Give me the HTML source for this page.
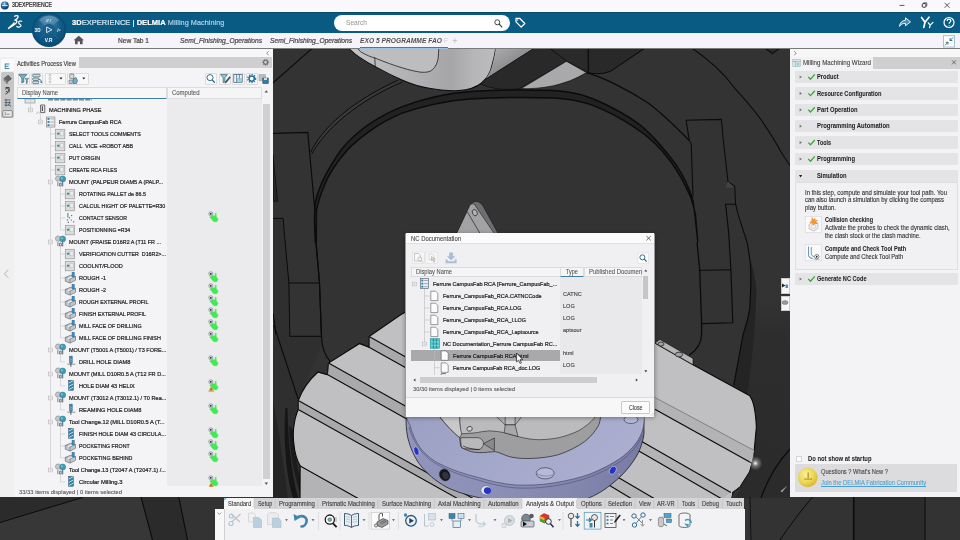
<!DOCTYPE html>
<html><head><meta charset="utf-8"><title>3DEXPERIENCE</title>
<style>
*{box-sizing:border-box;margin:0;padding:0}
html,body{width:960px;height:540px;overflow:hidden;background:#333;font-family:"Liberation Sans",sans-serif;}
.abs{position:absolute}
#root{will-change:transform;position:relative;width:960px;height:540px;overflow:hidden;background:#353535}
.t{position:absolute;white-space:pre;line-height:1;color:#222;-webkit-text-stroke:0.22px currentColor}
#titlebar{left:0;top:0;width:960px;height:12px;background:#faf8fa}
#bluebar{left:0;top:12px;width:960px;height:21px;background:#0a5b84;border-top:0.700px solid #064a6e}
#tabbar{left:0;top:33px;width:960px;height:16px;background:#f5f4f8;border-bottom:1px solid #7a7a7a}
#left{left:0;top:49px;width:272.600px;height:447.500px;background:#f4f3f5}
#right{left:790.300px;top:49px;width:170px;height:447.500px;background:#f3f2f4}
#bottom{left:222px;top:498px;width:523px;height:42px;background:#f4f4f4}
#dlg{left:405px;top:232px;width:250px;height:185px;background:#f4f4f4;border:1px solid #888}
</style></head><body><div id="root">
<svg class="abs" style="left:0;top:48px" width="960" height="492" viewBox="0 48 960 492">
<defs>
<linearGradient id="gSp" x1="0" y1="0" x2="1" y2="0"><stop offset="0" stop-color="#c6c6c8"/><stop offset="0.35" stop-color="#b4b4b6"/><stop offset="0.7" stop-color="#a6a6a8"/><stop offset="0.85" stop-color="#b6b6b8"/><stop offset="1" stop-color="#bcbcbe"/></linearGradient>
<linearGradient id="gSp2" x1="0" y1="0" x2="1" y2="1"><stop offset="0" stop-color="#b2b2b4"/><stop offset="1" stop-color="#6c6c6e"/></linearGradient>
<linearGradient id="gDiscSide" x1="0" y1="0" x2="1" y2="0"><stop offset="0" stop-color="#9195bc"/><stop offset="0.35" stop-color="#8c90b7"/><stop offset="0.7" stop-color="#8387ae"/><stop offset="1" stop-color="#787ca4"/></linearGradient>
<linearGradient id="gDiscTop" x1="0" y1="0" x2="1" y2="0.3"><stop offset="0" stop-color="#9b9fc2"/><stop offset="0.5" stop-color="#a3a7c9"/><stop offset="1" stop-color="#abaecf"/></linearGradient>
<linearGradient id="gRD" x1="0" y1="0" x2="0" y2="1"><stop offset="0" stop-color="#333334"/><stop offset="0.2" stop-color="#2d2d2e"/><stop offset="1" stop-color="#2b2b2c"/></linearGradient>
<radialGradient id="gGl" cx="0.5" cy="0.5" r="0.5"><stop offset="0" stop-color="#fff" stop-opacity="0.95"/><stop offset="0.4" stop-color="#fff" stop-opacity="0.35"/><stop offset="1" stop-color="#fff" stop-opacity="0"/></radialGradient>
<clipPath id="cpTable"><path d="M400.300 315 L440 292 L640 330 L655 343 L693 364.700 L749.800 395.800 C753 400 755.500 408 756.400 427 L753.600 456.700 L749.800 471.800 L740.300 486.900 L732.800 492.600 L732 499 L300 499 L300.200 466.100 C296 458 294.600 452.900 294 445 C293 438 293.200 432 293.600 428.300 C294.500 420 296 414 298.300 409.400 L298.300 400.600 C302 390 309 380 318 372 L327.400 374.600 L328.500 363 L359.600 343.500 L369.100 347.200 L369.100 336.600 Z"/></clipPath>
</defs>
<rect x="0" y="48" width="960" height="492" fill="#333334"/>
<path d="M272.800 83L312.500 48" stroke="#0b0b0b" stroke-width="1.050" fill="none"/>
<path d="M273 201L277.600 201.400L273 155Z" fill="#262626" stroke="#0b0b0b" stroke-width="0.700"/>
<path d="M273 218.400L283.200 218.400L284.200 232L288.900 283L289.800 336.300L321 336.300L322 344 L298.300 399.600 L295 430 L300 470 L306 498 L273 498Z" fill="#2f2f30"/>
<path d="M273 218.400L283.200 218.400L284.200 232L288.900 283L289.800 336.300L321 336.300" stroke="#0b0b0b" stroke-width="1" fill="none"/>
<path d="M273 313C274.500 320 275.200 327 275.700 334" stroke="#0b0b0b" stroke-width="1.050" fill="none"/>
<path d="M273.800 325L298.300 399.600" stroke="#0b0b0b" stroke-width="1.150" fill="none"/>
<path d="M273 400 L280 440 L288 498 L273 498Z" fill="#242425"/>
<path d="M285.500 408 C283 440 286 475 293 498 L298 498 C291 470 288 440 287.500 408Z" fill="#161616"/>
<path d="M289 425 C290 455 295 480 302 498 L306.500 498 C298 476 294 452 294 432Z" fill="#1b1b1b"/>
<path d="M273 133.400L307.800 132.400L315.300 215.600L315.300 232L319.500 283L321.400 334" stroke="#0b0b0b" stroke-width="1.150" fill="none"/>
<path d="M288.900 283L319.500 283" stroke="#0b0b0b" stroke-width="1" fill="none"/>
<path d="M310.600 152.300C322 128 352 101 398.400 80.100L402.200 82C358 101 326 128 311.600 154.200Z" fill="#3a3a3b"/>
<path d="M310.600 152.300C322 128 352 101 398.400 80.100" stroke="#0b0b0b" stroke-width="1" fill="none"/>
<path d="M311.600 154.200C326 128 358 101 402.200 82" stroke="#0b0b0b" stroke-width="1" fill="none"/>
<path d="M315.300 242 L314.400 219.300 C314.600 212 315 207 315.300 202.300 C319 185 327 170 341 150 C352 136 372 119 402.200 106.600 C425 98 445 93.500 470 91.500 C495 90 525 89.500 553.300 90.500 C570 91.500 582 94.500 591 98 C607 104.500 625 114 638.300 123.600 C652 134 662 146 676 164.600 C683 175 688 184 693 200.400 L695 215.600 L697.800 242 L697.800 242 L695.500 215 C694 207 692.500 203 691 198 C685 184 679 173 671 162 C661 148 650 137 634.600 127.300 C622 119 606 110.500 591 104.700 C580 101 568 98.500 553.300 98 C525 97 495 97.500 470 99 C446 100.800 426 105 402.200 113.200 C378 123 358 139 347.400 150 C335 164 327 178 323.800 187 C320.500 195 318.500 200 316.500 210 L316.300 242 Z" fill="#222223" stroke="#0b0b0b" stroke-width="1.400"/>
<path d="M315.800 242L319.500 283L321.400 334C321.500 345 324 355 330.400 361.800" stroke="#0b0b0b" stroke-width="1.200" fill="none"/>
<path d="M697 242L699.700 269.800L701.600 322.700L701.600 334C701.500 342 697 350 689.300 355.200" stroke="#0b0b0b" stroke-width="1.300" fill="none"/>
<path d="M586.400 72.600C600 76 625 88 647.800 102.800C660 112 672 123 689.300 140.600" stroke="#0b0b0b" stroke-width="1.300" fill="none"/>
<path d="M692 48C712 62 725 75 732.800 85.800C745 100 753 108 761 119.800C768 130 776 142 781 152L790 165.500" stroke="#0b0b0b" stroke-width="1.050" fill="none"/>
<path d="M764.900 48L772.400 53.700L780 48" stroke="#0b0b0b" stroke-width="1.050" fill="#2b2b2c"/>
<path d="M689.300 140.600L686.100 120.300L721.400 119.400L723.300 140L728 181.600L734.700 186.300L735.600 204.200L738.400 215.600L747 242" stroke="#0b0b0b" stroke-width="1.050" fill="none"/>
<path d="M728 181.600L725.600 187.500L734.700 187.500Z" fill="#434344"/>
<path d="M735.600 204.200L725.600 204.200L728.600 232L730.900 269.800L732.800 322.700L701.600 323.600" stroke="#0b0b0b" stroke-width="1.150" fill="none"/>
<path d="M699.700 270.300L730.900 269.800" stroke="#0b0b0b" stroke-width="1" fill="none"/>
<path d="M689.300 140.600L691.200 143.800L693 196.700" stroke="#0b0b0b" stroke-width="1.050" fill="none"/>
<path d="M750.700 260.300C755 275 756.800 288 756.400 298C756 312 755 322 754.500 334L756.400 325 L747.900 394.900 L733.700 385.400 L745 325 C748 318 749.500 312 749.800 307.600 C751 295 751 280 750.700 260.300Z" fill="#242425"/>
<path d="M747 242C749 252 750.300 262 750.700 269.800C751 285 750.500 297 749.800 307.600C748.500 318 746 326 743.200 334L733.700 385.400" stroke="#0b0b0b" stroke-width="1.150" fill="none"/>
<path d="M756.400 298 L790 298 L790 498 L735 498 L740.300 486.900 L749.800 471.800 L753.600 456.700 L756.400 427 L754 405 L749.800 395.800 L747.900 394.900 L754.500 334Z" fill="url(#gRD)"/>
<path d="M790 449C778 462 768 478 761 498" stroke="#0b0b0b" stroke-width="1.150" fill="none"/>
<path d="M780.500 491l7-5.500-5.500 7z" fill="#9a9a9a"/>
<path d="M82.500 497.500L141 497L152.500 540L0 540L0 522.500Z" fill="#373738"/>
<path d="M0 522.500L82.500 497.500L0 497.500Z" fill="#2b2b2c"/>
<path d="M0 522.500L82.500 497.500" stroke="#0b0b0b" stroke-width="1" fill="none"/>
<path d="M141 497L152.500 540L187.500 540L178.800 497Z" fill="#2b2b2c"/>
<path d="M141 497L152.500 540M178.800 497L187.500 540" stroke="#0b0b0b" stroke-width="1.100" fill="none"/>
<path d="M853.700 497L853.700 540L925 540L925 497Z" fill="#2c2c2d"/>
<path d="M853.700 497L853.700 540" stroke="#0b0b0b" stroke-width="1.600" fill="none"/><path d="M925 497L925 540" stroke="#0b0b0b" stroke-width="1" fill="none"/>
<path d="M812.500 497C800 512 790 525 780 540" stroke="#0b0b0b" stroke-width="1" fill="none"/>
<path d="M750 497L751 540" stroke="#0b0b0b" stroke-width="0.800" fill="none"/>
<path d="M348.400 48C356 56 366 62 375.800 66.900C385 72 394 76.500 402 80C412 84.500 421 87 430.600 88.600C440 90.500 450 91 459 90.500C468 90 476 87.500 481.600 83C487 78 489.500 74 491 68.800C493 62 495 55 495.700 48Z" fill="url(#gSp)" stroke="#0b0b0b" stroke-width="1.050"/>
<path d="M360.700 51.800C366 55 371 57 375.800 58.400C385 62 394 65.500 402.200 67.800C409 70 416 71.600 421 72.200C426 72.600 430 72 432.400 69.700C435.500 67 437.200 63 438 59.300C438.500 55 438.700 51 438.700 48L357 48Z" fill="#bdbdbf" stroke="#0b0b0b" stroke-width="0.700"/>
<path d="M374.800 57.400L375.200 67" stroke="#0b0b0b" stroke-width="0.700"/>
<path d="M495.700 48L534.400 48L485 79.500C489 75 491 70 492.300 65C493.800 59 495.200 53 495.700 48Z" fill="url(#gSp2)"/>
<path d="M534.400 48L549.600 48L568.400 60.300L519.300 88.600C505 91 490 88.500 480.600 83.900L485 79.500Z" fill="#29292a" stroke="#0b0b0b" stroke-width="0.700"/>
<path d="M549.600 48C553 50.500 556 52.500 560 54.500L568.400 60.300" stroke="#0b0b0b" stroke-width="0.700" fill="none"/>
<path d="M521.200 88.600L566.600 61.200L586.400 72.600C576 79 565 83 553.300 85.800C542 88 531 89 521.200 88.600Z" fill="#a9a9ab" stroke="#0b0b0b" stroke-width="0.600"/>
<path d="M549.600 48L588.300 48L588.300 72.500L566.600 61.200Z" fill="#2a2a2b" stroke="#0b0b0b" stroke-width="0.700"/>
<path d="M588.300 48L645 48L610 71.600C603 74 595 74.500 588.300 72.500Z" fill="#29292a" stroke="#0b0b0b" stroke-width="1.050"/>
<path d="M456.400 234L470.500 205C472 202 475 201 477.500 201.600C480 202.200 481.500 204 483 206L498.400 234Z" fill="#6e6e70" stroke="#0b0b0b" stroke-width="0.500"/>
<path d="M456.400 234L469.800 205.500C471 203.500 473 203.300 474.500 204.500L494.600 234Z" fill="#a2a2a4" stroke="#0b0b0b" stroke-width="0.500"/>
<path d="M467.200 211.700L480.400 234" stroke="#0b0b0b" stroke-width="0.600"/>
<ellipse cx="474.800" cy="212.700" rx="2.300" ry="3.300" transform="rotate(-25 474.800 212.700)" fill="#b4b4b6" stroke="#0b0b0b" stroke-width="0.600"/>
<path d="M400.300 315 L440 292 L640 330 L655 343 L693 364.700 L749.800 395.800 C753 400 755.500 408 756.400 427 L753.600 456.700 L749.800 471.800 L740.300 486.900 L732.800 492.600 L732 499 L300 499 L300.200 466.100 C296 458 294.600 452.900 294 445 C293 438 293.200 432 293.600 428.300 C294.500 420 296 414 298.300 409.400 L298.300 400.600 C302 390 309 380 318 372 L327.400 374.600 L328.500 363 L359.600 343.500 L369.100 347.200 L369.100 336.600 Z" fill="#c0c0c2" stroke="#0b0b0b" stroke-width="1.150"/>
<g clip-path="url(#cpTable)">
<path d="M369.1 336.6L470 393.10400000000004L470 403.70399999999995L369.1 347.2Z" fill="#a9a9ab"/>
<path d="M369.1 336.6L470 393.10400000000004M369.1 347.2L470 403.70399999999995M369.1 336.6L369.1 347.2" stroke="#0b0b0b" stroke-width="1.100" fill="none"/>
<path d="M359.600 343.500L369.100 347.200" stroke="#0b0b0b" stroke-width="1.100"/>
<path d="M328.5 363L470 442.24L470 454.456L327.4 374.6Z" fill="#a9a9ab"/>
<path d="M328.5 363L470 442.24M327.4 374.6L470 454.456M328.5 363L327.4 374.6" stroke="#0b0b0b" stroke-width="1.100" fill="none"/>
<path d="M318 372L327.400 374.600" stroke="#0b0b0b" stroke-width="1.100"/>
<path d="M298.3 400.6L520 524.7520000000001L520 533.552L298.3 409.4Z" fill="#a9a9ab"/>
<path d="M298.3 400.6L520 524.7520000000001M298.3 409.4L520 533.552M298.3 400.6L298.3 409.4" stroke="#0b0b0b" stroke-width="1.100" fill="none"/>
<path d="M300.200 466L360 499.500L300 499.500Z" fill="#b3b3b5" stroke="#0b0b0b" stroke-width="1.150"/>
<path d="M640 389.5L757 452L752 463.2L636 398.7Z" fill="#b3b3b5"/>
<path d="M640 389.5L757 452" stroke="#6a6a6c" stroke-width="0.700" fill="none"/><path d="M636 398.7L752 463.2" stroke="#0b0b0b" stroke-width="1.250" fill="none"/>
<path d="M630 434.7L730.9 492.6L722 499L628 444.7Z" fill="#b3b3b5"/>
<path d="M630 434.7L730.9 492.6M628 444.7L722 499" stroke="#0b0b0b" stroke-width="1.150" fill="none"/>
<path d="M600 466.8L655 499L632 499L596 477.2Z" fill="#b3b3b5"/>
<path d="M600 466.8L655 499M596 477.2L632 499" stroke="#0b0b0b" stroke-width="1.150" fill="none"/>
<path d="M732.800 492.600L740.300 486.900L749.800 471.800L753.600 456.700L756.400 440L757 499L732 499Z" fill="#aeaeb0" stroke="#0b0b0b" stroke-width="1.050"/>
<path d="M741 490v9" stroke="#0b0b0b" stroke-width="0.700"/>
<path d="M750.500 470c-1.500 4-2 9-1.500 13l2.500-1.500c.3-4 .8-8 1.800-11z" fill="#9a9a9c" stroke="#0b0b0b" stroke-width="0.600"/>
</g>
<path d="M655 343L660 339.500L693 358.500L693 364.700Z" fill="#b6b6b8" stroke="#0b0b0b" stroke-width="0.600"/>
<ellipse cx="661" cy="344" rx="3" ry="2" fill="#a2a2a4" stroke="#222" stroke-width="0.800"/><ellipse cx="679" cy="354.500" rx="3.600" ry="2.400" fill="#a2a2a4" stroke="#222" stroke-width="0.800"/>
<circle cx="755.400" cy="463.300" r="7" fill="url(#gGl)"/>
<path d="M406 419C406 428 407 436 408.800 441.600C412 452 416 460 421 466C430 477 440 484 450 488.800C462 494 475 497.500 490 499.500L585 499.500C597 495 606 489 613 483C622 476 632 465 638.300 452.900C641 447 643 441 644 434L644 419Z" fill="url(#gDiscSide)" stroke="#0b0b0b" stroke-width="0.700"/>
<path d="M406 410C406 418 407.500 421 409.800 424.600C412 434 416 442 421 449C428 457 434 461 440 464C452 470 464 474 477.800 477.400C490 481 502 484 515.600 485C528 485.500 541 485 553.300 483C566 481 579 478 591 473.700C602 469 612 464 620 458.600C630 451 638 443 642 432C644 426 644.500 420 644.500 410Z" fill="url(#gDiscTop)" stroke="#3a3c58" stroke-width="0.600"/>
<path d="M409 427C412 438 417 446 422 452C429 460 436 464 442 467C454 473 466 477 479 480.300C491 484 503 487 516 488C528 488.500 541 488 553.500 486C566 484 579 481 591 476.700C602 472 612 467 620.500 461.600C630 454 638 446 642.500 435" stroke="#5a5e88" stroke-width="0.800" fill="none"/>
<ellipse cx="545.200" cy="473.300" rx="9" ry="5.600" fill="#b7bbd9" stroke="#2a2c40" stroke-width="0.600"/><path d="M536.500 472.500c2 4 14 5 17.500 1" stroke="#8a8eb5" stroke-width="1.050" fill="none"/>
<ellipse cx="631" cy="419.500" rx="7" ry="4" fill="#b7bbd9" stroke="#2a2c40" stroke-width="0.600"/>
<ellipse cx="416.400" cy="451" rx="2.400" ry="4.400" transform="rotate(-15 416.400 451)" fill="#2334c4" stroke="#dfe2f5" stroke-width="0.500"/>
<ellipse cx="444.700" cy="475" rx="5.200" ry="6.200" transform="rotate(-30 444.700 475)" fill="#15151d" stroke="#444" stroke-width="0.500"/><ellipse cx="445.500" cy="475.500" rx="3" ry="3.800" transform="rotate(-30 445.500 475.500)" fill="#333340"/>
<ellipse cx="486.300" cy="490.300" rx="5.400" ry="4.600" fill="#e4e6f4" stroke="#555a88" stroke-width="0.500"/><ellipse cx="487.500" cy="490.600" rx="3.600" ry="3.400" fill="#2334c4"/>
<ellipse cx="612.800" cy="470.300" rx="3" ry="4.300" transform="rotate(30 612.800 470.300)" fill="#2334c4" stroke="#dfe2f5" stroke-width="0.500"/><path d="M617.500 472.500l2.500 1.500-.5 2.500z" fill="#ddd" stroke="#555" stroke-width="0.400"/>
<path d="M440 410L440 417C446 425 453 432 459.700 437.700L460.500 445C461 447.500 462 448.300 463.700 448.600C469 451.500 474 452.600 479.500 452.600C485 452.800 490 451.800 495.300 451.600C500 452.500 504 455 509.200 456.600C516 458.200 522 458.600 529 458.500C540 458.300 550 457 558.700 454.600C568 451.500 577 447 584.500 441.700C591 436.500 595 431.500 598.300 425.900C600 422 600.700 419 600.700 410Z" fill="#9e9ea0" stroke="#0b0b0b" stroke-width="0.600"/>
<path d="M459.700 410C459.500 418 459.500 426 460.700 433.800C466 433.500 471 433.200 475.500 432.800C480 432 485 431 489.400 430.800C495 431 500 431.800 505.200 432.800C510 434 514 435.600 519.100 436.800C526 438.600 532 439.600 538.900 439.700C546 439.600 552 439 558.700 437.700C566 436 572 433.800 578.500 430.800C585 427 590 423 594.400 418L596 410Z" fill="#bbbbbd" stroke="#0b0b0b" stroke-width="0.500"/>
<path d="M440 410L440 417C446 425 453 432 459.700 437.700C460.500 436 461 435 461.700 433.800C460 428 459.500 422 459.700 417L459.700 410Z" fill="#c9c9cb" stroke="#0b0b0b" stroke-width="0.500"/>
<path d="M489.400 410L505.200 424.900L515.100 424.900L527 410Z" fill="#b2b2b4" stroke="#0b0b0b" stroke-width="0.500"/>
<path d="M505.200 410L505.200 424.900L515.100 424.900L515.100 410Z" fill="#bcbcbe" stroke="#0b0b0b" stroke-width="0.500"/>
<path d="M505.200 424.900L504.200 432.800L518 436.500L515.100 424.900Z" fill="#a8a8aa" stroke="#0b0b0b" stroke-width="0.500"/>
<path d="M460.700 437.700L478 437.700C481 438 483.500 440.500 483.500 443.600C483.500 446.800 481 449.300 478 449.600L463.700 448.600C461.500 447.800 460.700 446 460.700 437.700Z" fill="#b9b9bb" stroke="#0b0b0b" stroke-width="0.500"/>
<path d="M483.500 443.600L494.400 438L494.400 450.500Z" fill="#8a8a8c" stroke="#0b0b0b" stroke-width="0.500"/>
<path d="M463 446C468 448.500 474 449.300 479.500 449.600" stroke="#0b0b0b" stroke-width="0.600" fill="none"/>
<ellipse cx="469.600" cy="428.800" rx="2.700" ry="2.300" transform="rotate(-20 469.600 428.800)" fill="#d2d2d4" stroke="#0b0b0b" stroke-width="0.600"/>
</svg>
<div class="abs" id="titlebar"></div>
<svg class="abs" style="left:0;top:0" width="14" height="12" viewBox="0 0 14 12"><defs><radialGradient id="gLogo" cx="0.4" cy="0.3" r="0.7"><stop offset="0" stop-color="#7fb4dc"/><stop offset="0.6" stop-color="#1f5f95"/><stop offset="1" stop-color="#0a3560"/></radialGradient></defs><circle cx="4.8" cy="5.6" r="4" fill="url(#gLogo)"/><path d="M2 5.5h5.6M4.8 2.6v2.2" stroke="#e8f2fa" stroke-width="0.9" fill="none"/></svg>
<div class="t" style="left:12.00px;top:2.48px;font-size:6.6px;color:#222;transform:scaleX(0.785);transform-origin:0 0;">3DEXPERIENCE</div>
<svg class="abs" style="left:890px;top:0" width="70" height="12" viewBox="890 0 70 12" fill="none" stroke="#333" stroke-width="0.8"><path d="M899.5 5.4h5"/><rect x="922.3" y="3.6" width="3.6" height="3.6" rx="0.8" stroke-width="1"/><path d="M923.4 2.8h3.4v3.4" stroke-width="0.7"/><path d="M944.6 2.8l5 5M949.6 2.8l-5 5"/></svg>
<div class="abs" id="bluebar"></div>
<div class="abs" id="tabbar"></div>
<!-- 3DS logo -->
<svg class="abs" style="left:5px;top:13px" width="22" height="19" viewBox="5 13 22 19" fill="none" stroke="#fff" stroke-linecap="round"><path d="M14.5 16.2c2-1.2 4-.6 3.6 1-.3 1.300-2 2.400-3.600 3.100 1.600-.2 2.800.5 2.300 1.800-.6 1.700-5 4.200-8.600 6.600 2.700-2.800 5.300-4.600 5.900-5.800" stroke-width="1.300"/><path d="M21.700 21.300c-1.300-.6-2.800-.2-3.100.9-.3 1 .6 1.600 1.500 2.200.9.600 1.300 1.400.3 2.200-1 .7-2.600.5-3.600-.2" stroke-width="1.200"/></svg>
<!-- brand text -->
<div class="t" style="left:72px;top:18.800px;font-size:7.600px;color:#fff;letter-spacing:0.05px;transform:scaleX(0.985);transform-origin:0 0"><b>3D</b><span style="color:#d6e6f0">EXPERIENCE</span> <span style="color:#fff">|</span> <b>DELMIA</b> <span style="color:#a9cfe6;font-size:7.400px">Milling Machining</span></div>
<!-- compass -->
<svg class="abs" style="left:30px;top:11px" width="38" height="38" viewBox="30 11 38 38"><defs><radialGradient id="gC" cx="0.5" cy="0.35" r="0.7"><stop offset="0" stop-color="#3f7fa6"/><stop offset="0.55" stop-color="#115a86"/><stop offset="1" stop-color="#084a73"/></radialGradient><linearGradient id="gC2" x1="0" y1="0" x2="0" y2="1"><stop offset="0" stop-color="#8fb6cf"/><stop offset="1" stop-color="#2f7098"/></linearGradient></defs>
<circle cx="49" cy="29.800" r="17.200" fill="#0b4f79"/><circle cx="49" cy="29.800" r="16" fill="url(#gC)" stroke="#06466e" stroke-width="0.6"/>
<path d="M37.800 22.500a13.600 13.600 0 0 1 22.400 0 13.600 13.600 0 0 0-22.400 0z" fill="none"/><path d="M49 29.800L39.200 20L39.450 20.250A13.800 13.800 0 0 1 58.800 20Z" fill="url(#gC2)" opacity="0.600"/><path d="M39.200 20A13.800 13.800 0 0 1 58.800 20" fill="none" stroke="#8fb6cf" stroke-width="0.500" opacity="0.700"/>
<circle cx="49" cy="29.800" r="5.600" fill="#1a628d" stroke="#0c4e78" stroke-width="0.5"/>
<path d="M46.600 27l5.300 2.800-5.300 2.800z" fill="none" stroke="#fff" stroke-width="0.800" stroke-linejoin="round"/>
<path d="M40 38.500l4-4M58 38.500l-4-4" stroke="#3f81a8" stroke-width="0.500"/>
<text x="34.600" y="31.500" font-family="Liberation Sans,sans-serif" font-size="4.600" font-weight="bold" fill="#fff">3D</text>
<text x="44.800" y="41.800" font-family="Liberation Sans,sans-serif" font-size="4.800" font-weight="bold" fill="#fff">V.R</text>
<text x="46" y="21.600" font-family="Liberation Sans,sans-serif" font-size="4.400" font-style="italic" font-weight="bold" fill="#e6f0f7">// /</text>
<text x="57.300" y="31.500" font-family="Liberation Sans,sans-serif" font-size="4.800" font-style="italic" font-weight="bold" fill="#e6f0f7">i²</text>
</svg>
<!-- search -->
<div class="abs" style="left:334px;top:15px;width:176px;height:15.500px;border-radius:8px;background:#fff"></div>
<div class="t" style="left:346px;top:20px;font-size:6.600px;color:#999;-webkit-text-stroke:0.05px currentColor">Search</div>
<svg class="abs" style="left:492px;top:17px" width="36" height="12" viewBox="492 17 36 12" fill="none"><circle cx="497.300" cy="22.300" r="2.500" stroke="#333" stroke-width="0.900"/><path d="M499.200 24.200l2.600 2.600" stroke="#333" stroke-width="1.100" stroke-linecap="round"/><path d="M516 18.300h3.600l5.200 5.200-3.600 3.600-5.200-5.200z" stroke="#fff" stroke-width="1.250" stroke-linejoin="round"/><circle cx="517.700" cy="20" r="0.700" fill="#fff"/></svg>
<!-- right icons -->
<svg class="abs" style="left:895px;top:14px" width="65" height="18" viewBox="895 14 65 18" fill="none" stroke="#fff"><path d="M905.500 17.800l5 4-5 4v-2.400c-2.800-.2-4.800.8-6 3 .3-3.600 2.400-5.800 6-6.200z" stroke-width="0.900" stroke-linejoin="round" fill="#cfe3f0" fill-opacity="0.35"/><path d="M921.600 17.400l3.400 4.800-1.200 5.200M929 17.200l-4 5" stroke-width="1.700" stroke-linecap="round"/><path d="M928.300 22.800l1.900 2.200-.6 2.600M933 22.400l-2.800 2.800" stroke-width="1.200" stroke-linecap="round"/><circle cx="949" cy="22.500" r="5" stroke-width="1.200"/><path d="M947.200 21c0-1.200.8-1.800 1.800-1.800s1.800.7 1.800 1.600c0 1.300-1.700 1.400-1.700 2.900" stroke-width="1.200"/><circle cx="949.100" cy="25.500" r="0.550" fill="#fff" stroke="none"/></svg>
<!-- tabs -->
<svg class="abs" style="left:73px;top:35px" width="12" height="10" viewBox="73 35 12 10"><path d="M73.600 40.200l5.200-4.400 5.200 4.400h-1.400v4h-2.600v-2.600h-2.400v2.600h-2.600v-4z" fill="#555"/></svg>
<div class="t" style="left:118px;top:38px;font-size:6.600px;color:#4a4a4a">New Tab 1</div>
<div class="t" style="left:180px;top:37.900px;font-size:6.700px;color:#4a4a4a;font-style:italic;width:84px;overflow:hidden">Semi_Finishing_Operations</div>
<div class="t" style="left:270px;top:37.900px;font-size:6.700px;color:#4a4a4a;font-style:italic;width:85px;overflow:hidden">Semi_Finishing_Operations</div>
<div class="t" style="left:360px;top:37.900px;font-size:6.600px;color:#505050;font-style:italic;font-weight:bold;letter-spacing:0.05px;-webkit-text-stroke:0">EXO 5 PROGRAMME FAO <span style="color:#ccc;font-weight:normal">F</span></div>
<div class="abs" style="left:359.500px;top:46.900px;width:88.500px;height:1.500px;background:#3d7ea8"></div><div class="abs" style="left:359.500px;top:48.300px;width:88.500px;height:0.900px;background:#9cc3e2"></div>
<div class="t" style="left:452.300px;top:36.500px;font-size:9px;color:#aaa;-webkit-text-stroke:0">+</div>
<svg class="abs" style="left:942px;top:35px" width="14" height="13" viewBox="942 35 14 13"><rect x="943.300" y="35.800" width="11.400" height="11.200" fill="#fff" stroke="#6f9dbb" stroke-width="0.600"/><path d="M953 37.500l-3 3m0-2.300v2.300h2.300M945 45.300l3-3m0 2.300v-2.300h-2.300" stroke="#2f5f80" stroke-width="0.900" fill="none"/></svg>
<div class="abs" id="left"></div>
<div class="abs" style="left:0;top:49px;width:272.600px;height:8px;background:#f7f6f8"></div>
<div class="abs" style="left:14px;top:57px;width:258px;height:11px;background:#cfcfcf"></div>
<div class="abs" style="left:14px;top:57px;width:65px;height:11.5px;background:#f4f4f4"></div>
<div class="t" style="left:17.00px;top:61.00px;font-size:6.4px;color:#333;transform:scaleX(0.899);transform-origin:0 0;-webkit-text-stroke:0.1px currentColor;">Activities Process View</div>
<svg class="abs" style="left:260px;top:49px" width="13" height="20" viewBox="260 49 13 20" fill="none"><path d="M268.6 51.3l-1.8 2 1.8 2" stroke="#666" stroke-width="0.7"/><circle cx="265.6" cy="62.3" r="2" stroke="#666" stroke-width="1.1"/><circle cx="265.6" cy="62.3" r="3" stroke="#666" stroke-width="0.9" stroke-dasharray="1 1.1"/></svg>
<div class="abs" style="left:0;top:57px;width:14px;height:440px;background:#f0f0f0"></div>
<div class="abs" style="left:1px;top:59px;width:13px;height:12px;background:#fafafa;border-radius:1.5px 0 0 1.5px"></div>
<div class="abs" style="left:1px;top:71.600px;width:13px;height:46.400px;background:#c6c6c6;border-radius:1.5px"></div>
<svg class="abs" style="left:0;top:58px" width="14" height="62" viewBox="0 58 14 62" fill="none"><path d="M5.200 63.600v5.200M5.200 64h4.200M5.200 66.300h3.400M5.200 68.600h4.200" stroke="#2f7a9e" stroke-width="0.900"/><path d="M4 78.500l4.200-3.300 3.200 3.600-4.200 3.300z" fill="#666" stroke="#333" stroke-width="0.500"/><path d="M4 78.500v1.800l3.200 3.500v-1.700" fill="#999" stroke="#333" stroke-width="0.400"/><path d="M5.500 87.500h3.600v4.200M5 89.300c2-1.300 4-.7 4 1 0 1.700-1.700 3-3.600 3.800M5.800 91.700c1.400-.5 2.400.1 2.200 1" stroke="#333" stroke-width="0.900"/><path d="M4.600 100h6M4.600 102.600h6M4.600 105.200h6M6 98.800v7.600M9.400 101.400v2.600" stroke="#444" stroke-width="0.700"/><path d="M8 104l2.800 2.600" stroke="#2f7a9e" stroke-width="1"/><rect x="2.700" y="110.600" width="9.600" height="6.400" rx="1" fill="#e8e8e8" stroke="#555" stroke-width="0.600"/><path d="M5.200 112.200v3.300M6.500 114.200h3" stroke="#555" stroke-width="0.600"/></svg>
<svg class="abs" style="left:2px;top:268px" width="8" height="12" viewBox="2 268 8 12" fill="none"><path d="M8.300 269.800l-3.800 4 3.800 4" stroke="#aaa" stroke-width="0.900"/></svg>
<div class="abs" style="left:17.5px;top:72.5px;width:12.5px;height:12px;background:#f8f8f8;border:0.6px solid #dcdcdc;border-radius:1px"></div>
<div class="abs" style="left:31px;top:72.5px;width:12px;height:12px;background:#f8f8f8;border:0.6px solid #dcdcdc;border-radius:1px"></div>
<div class="abs" style="left:44.5px;top:72.5px;width:21px;height:12px;background:#f8f8f8;border:0.6px solid #dcdcdc;border-radius:1px"></div>
<div class="abs" style="left:67px;top:72.5px;width:22px;height:12px;background:#f8f8f8;border:0.6px solid #dcdcdc;border-radius:1px"></div>
<div class="abs" style="left:204.5px;top:72.5px;width:12.5px;height:12px;background:#f8f8f8;border:0.6px solid #dcdcdc;border-radius:1px"></div>
<div class="abs" style="left:218.5px;top:72.5px;width:12.5px;height:12px;background:#f8f8f8;border:0.6px solid #dcdcdc;border-radius:1px"></div>
<div class="abs" style="left:232px;top:72.5px;width:12.5px;height:12px;background:#f8f8f8;border:0.6px solid #dcdcdc;border-radius:1px"></div>
<div class="abs" style="left:245.5px;top:72.5px;width:12.5px;height:12px;background:#f8f8f8;border:0.6px solid #dcdcdc;border-radius:1px"></div>
<svg class="abs" style="left:17px;top:72px" width="256" height="14" viewBox="17 72 256 14" fill="none"><path d="M18.800 74.600h8l-3 3.400v4l-2 1v-5z" fill="#6fb7c9" stroke="#245" stroke-width="0.600"/><path d="M25 78.400h3.600l-1.300 1.700v3l-1 .5v-3.500z" fill="#7cc" stroke="#245" stroke-width="0.500"/><rect x="32.700" y="74.300" width="7.400" height="2.600" rx="0.800" fill="#cfe3ea" stroke="#245" stroke-width="0.600"/><rect x="32.700" y="78" width="6" height="2.400" rx="0.800" fill="#cfe3ea" stroke="#245" stroke-width="0.600"/><rect x="32.700" y="81.200" width="6" height="2.400" rx="0.800" fill="#cfe3ea" stroke="#245" stroke-width="0.600"/><path d="M38.800 79.500c2.200 0 3 1.300 2.200 3l1.300-.3M41 82.500l-.8-1" stroke="#1f6f8f" stroke-width="0.900"/><circle cx="50" cy="75.300" r="1" stroke="#999" stroke-width="0.500"/><circle cx="50" cy="78.500" r="1" stroke="#999" stroke-width="0.500"/><circle cx="50" cy="81.800" r="1" stroke="#999" stroke-width="0.500"/><path d="M59.500 77.600h3l-1.500 1.800z" fill="#222"/><rect x="69.800" y="74" width="4" height="4.600" rx="0.600" fill="#ddd" stroke="#456" stroke-width="0.600"/><path d="M69 80h3.300v3.500H69z" fill="#bcd" stroke="#456" stroke-width="0.500"/><path d="M73 79l3-1.500 1.500 3-1 3h-3.200z" fill="#6fb0d0" stroke="#245" stroke-width="0.500"/><path d="M82.300 77.600h3l-1.500 1.800z" fill="#222"/><circle cx="210" cy="77.600" r="3" stroke="#1f5f80" stroke-width="0.900" fill="#fff"/><path d="M212.200 80l2.600 2.700" stroke="#1f5f80" stroke-width="1.200"/><path d="M220.500 74.600h7l-2.600 3.200v4l-1.800.9v-4.900z" fill="#8ecbd8" stroke="#245" stroke-width="0.600"/><path d="M229.500 76.600l-4 5-.6 1.600 1.600-.7 4-5z" fill="#456" stroke="#234" stroke-width="0.400"/><rect x="233.800" y="74.600" width="8.400" height="8" fill="#eef" stroke="#245" stroke-width="0.600"/><path d="M236.600 74.600v8M239.400 74.600v5" stroke="#245" stroke-width="0.600"/><path d="M236.600 78h5.600v4.600h-5.600z" fill="#7fc0d5" opacity="0.700"/><circle cx="251.700" cy="78.600" r="2.600" stroke="#1f6f95" stroke-width="1.500" fill="#fff"/><circle cx="251.700" cy="78.600" r="4" stroke="#1f6f95" stroke-width="1.200" stroke-dasharray="1.300 1.300"/><rect x="259" y="74.400" width="6.500" height="6.500" fill="#bbb" stroke="#999" stroke-width="0.400"/><rect x="262.800" y="78" width="5.600" height="5.600" fill="#2f7f9f" stroke="#245" stroke-width="0.500"/><rect x="264" y="78" width="3" height="2" fill="#cde"/></svg>
<div class="abs" style="left:16.500px;top:87px;width:150px;height:11.500px;background:#f7f7f7;border:0.600px solid #ddd;border-bottom:1.400px solid #3d7ea8"></div>
<div class="abs" style="left:166.500px;top:87px;width:95px;height:11.500px;background:#f5f5f5;border:0.600px solid #ddd"></div>
<div class="t" style="left:22.00px;top:90.00px;font-size:6.3px;color:#555;transform:scaleX(0.918);transform-origin:0 0;-webkit-text-stroke:0.08px currentColor;">Display Name</div>
<div class="t" style="left:171.50px;top:90.00px;font-size:6.3px;color:#555;transform:scaleX(0.946);transform-origin:0 0;-webkit-text-stroke:0.08px currentColor;">Computed</div>
<div class="abs" style="left:166.500px;top:98.500px;width:95px;height:387px;background:#ebeaec"></div>
<div class="abs" style="left:263px;top:104px;width:6.500px;height:375px;background:#d0cfd1"></div>
<svg class="abs" style="left:262px;top:88px" width="10" height="402" viewBox="262 88 10 402"><path d="M264.600 92.600h3.400l-1.700-2.400zM264.600 482.600h3.400l-1.700 2.400z" fill="#555"/></svg>
<div class="t" style="left:18.50px;top:489.00px;font-size:6.2px;color:#555;transform:scaleX(0.940);transform-origin:0 0;-webkit-text-stroke:0.1px currentColor;">33/33 items displayed | 0 items selected</div>
<svg class="abs" style="left:14px;top:99px" width="252" height="388" viewBox="14 99 252 388" fill="none"><rect x="25" y="99" width="10" height="4" fill="#e4e4e4" stroke="#777" stroke-width="0.500"/><path d="M48 99.800h44" stroke="#666" stroke-width="1.400" stroke-dasharray="5 1.200" opacity="0.800"/><path d="M30.500 99v11M40.500 114v8M50.500 126v344.500" stroke="#c4c4c4" stroke-width="0.600"/><rect x="28.6" y="108.1" width="3.800" height="3.800" fill="#f8f8f8" stroke="#aaa" stroke-width="0.500"/><path d="M29.5 110h2" stroke="#777" stroke-width="0.500"/><path d="M40.6 105h4.200v7.600h-4.200z" fill="#e8e8e8" stroke="#333" stroke-width="0.700"/><path d="M42.4 106.2v4.800" stroke="#333" stroke-width="0.900"/><path d="M36 114l2.400-2 1.600 1.600" stroke="#888" stroke-width="0.500" fill="none"/><rect x="38.6" y="120.1" width="3.800" height="3.800" fill="#f8f8f8" stroke="#aaa" stroke-width="0.500"/><path d="M39.5 122h2" stroke="#777" stroke-width="0.500"/><rect x="46.5" y="117" width="8.400" height="10" fill="#eee" stroke="#777" stroke-width="0.600"/><rect x="47.5" y="118.0" width="2" height="1.800" fill="#2f7fa5"/><path d="M50.3 118.9h3.800" stroke="#888" stroke-width="0.600"/><rect x="47.5" y="121.1" width="2" height="1.800" fill="#2f7fa5"/><path d="M50.3 122.0h3.800" stroke="#888" stroke-width="0.600"/><rect x="47.5" y="124.2" width="2" height="1.800" fill="#2f7fa5"/><path d="M50.3 125.10000000000001h3.800" stroke="#888" stroke-width="0.600"/><path d="M50.500 134h5" stroke="#c4c4c4" stroke-width="0.600"/><rect x="55.5" y="129.3" width="9.300" height="9.500" fill="#dcdcdc" stroke="#9a9a9a" stroke-width="0.700"/><rect x="60.1" y="131.2" width="3.400" height="4.600" fill="#ececec" stroke="#b5b5b5" stroke-width="0.500"/><rect x="57.1" y="132.8" width="2.400" height="1.800" fill="#2f8c96"/><path d="M50.500 146h5" stroke="#c4c4c4" stroke-width="0.600"/><rect x="55.5" y="141.3" width="9.300" height="9.500" fill="#dcdcdc" stroke="#9a9a9a" stroke-width="0.700"/><rect x="60.1" y="143.2" width="3.400" height="4.600" fill="#ececec" stroke="#b5b5b5" stroke-width="0.500"/><rect x="57.1" y="144.8" width="2.400" height="1.800" fill="#2f8c96"/><path d="M50.500 158h5" stroke="#c4c4c4" stroke-width="0.600"/><rect x="55.5" y="153.3" width="9.300" height="9.500" fill="#dcdcdc" stroke="#9a9a9a" stroke-width="0.700"/><rect x="60.1" y="155.2" width="3.400" height="4.600" fill="#ececec" stroke="#b5b5b5" stroke-width="0.500"/><rect x="57.1" y="156.8" width="2.400" height="1.800" fill="#2f8c96"/><path d="M50.500 170h5" stroke="#c4c4c4" stroke-width="0.600"/><rect x="55.5" y="165.3" width="9.300" height="9.500" fill="#dcdcdc" stroke="#9a9a9a" stroke-width="0.700"/><rect x="60.1" y="167.2" width="3.400" height="4.600" fill="#ececec" stroke="#b5b5b5" stroke-width="0.500"/><rect x="57.1" y="168.8" width="2.400" height="1.800" fill="#2f8c96"/><rect x="48.6" y="180.1" width="3.800" height="3.800" fill="#f8f8f8" stroke="#aaa" stroke-width="0.500"/><path d="M49.5 182h2" stroke="#777" stroke-width="0.500"/><circle cx="58.1" cy="178.6" r="2.700" fill="#c4c6c8" stroke="#8a8c8e" stroke-width="0.600"/><circle cx="62.7" cy="179" r="3" fill="#3a9db5" stroke="#2a7f95" stroke-width="0.500"/><circle cx="61.9" cy="178.2" r="1" fill="#7fc8d8"/><path d="M62.7 182v4.400" stroke="#456" stroke-width="0.900"/><path d="M57.9 182v4.200M59.5 183.2h1.800v2.800h-1.800z" stroke="#456" stroke-width="0.700" fill="none"/><path d="M60.500 194h4.500" stroke="#c4c4c4" stroke-width="0.600"/><rect x="65.3" y="189.3" width="9.300" height="9.500" fill="#dcdcdc" stroke="#9a9a9a" stroke-width="0.700"/><rect x="69.89999999999999" y="191.2" width="3.400" height="4.600" fill="#ececec" stroke="#b5b5b5" stroke-width="0.500"/><rect x="66.89999999999999" y="192.8" width="2.400" height="1.800" fill="#2f8c96"/><path d="M60.500 206h4.500" stroke="#c4c4c4" stroke-width="0.600"/><rect x="65.3" y="201.3" width="9.300" height="9.500" fill="#dcdcdc" stroke="#9a9a9a" stroke-width="0.700"/><rect x="69.89999999999999" y="203.2" width="3.400" height="4.600" fill="#ececec" stroke="#b5b5b5" stroke-width="0.500"/><rect x="66.89999999999999" y="204.8" width="2.400" height="1.800" fill="#2f8c96"/><path d="M60.500 218h4.500" stroke="#c4c4c4" stroke-width="0.600"/><path d="M67.89999999999999 213v4.600" stroke="#2f8c96" stroke-width="1"/><circle cx="67.3" cy="219.8" r="0.600" fill="#335"/><circle cx="69.5" cy="217.8" r="0.600" fill="#335"/><circle cx="71.3" cy="220" r="0.600" fill="#335"/><circle cx="73.7" cy="221.8" r="0.600" fill="#335"/><circle cx="68.3" cy="222.2" r="0.600" fill="#335"/><circle cx="71.7" cy="215.6" r="0.600" fill="#335"/><path d="M209.6 217.0L212.8 215.4L215 215.8L215.2 212.9L216.2 212.9L216.4 216.4L218.3 219.6L216.6 222.0L213.6 221.8Z" fill="#42ea52" stroke="#5af06a" stroke-width="0.300"/><circle cx="210.800" cy="213.8" r="2.100" fill="#d8dce4" stroke="#8a8e98" stroke-width="0.700"/><circle cx="210.800" cy="213.8" r="0.900" fill="#1c1c28"/><path d="M60.500 230h4.500" stroke="#c4c4c4" stroke-width="0.600"/><rect x="65.3" y="225.3" width="9.300" height="9.500" fill="#dcdcdc" stroke="#9a9a9a" stroke-width="0.700"/><rect x="69.89999999999999" y="227.2" width="3.400" height="4.600" fill="#ececec" stroke="#b5b5b5" stroke-width="0.500"/><rect x="66.89999999999999" y="228.8" width="2.400" height="1.800" fill="#2f8c96"/><rect x="48.6" y="240.1" width="3.800" height="3.800" fill="#f8f8f8" stroke="#aaa" stroke-width="0.500"/><path d="M49.5 242h2" stroke="#777" stroke-width="0.500"/><circle cx="58.1" cy="238.6" r="2.700" fill="#c4c6c8" stroke="#8a8c8e" stroke-width="0.600"/><circle cx="62.7" cy="239" r="3" fill="#3a9db5" stroke="#2a7f95" stroke-width="0.500"/><circle cx="61.9" cy="238.2" r="1" fill="#7fc8d8"/><path d="M62.7 242v4.400" stroke="#456" stroke-width="0.900"/><path d="M57.9 242v4.200M59.5 243.2h1.800v2.800h-1.800z" stroke="#456" stroke-width="0.700" fill="none"/><path d="M60.500 254h4.500" stroke="#c4c4c4" stroke-width="0.600"/><rect x="65.3" y="249.3" width="9.300" height="9.500" fill="#dcdcdc" stroke="#9a9a9a" stroke-width="0.700"/><rect x="69.89999999999999" y="251.2" width="3.400" height="4.600" fill="#ececec" stroke="#b5b5b5" stroke-width="0.500"/><rect x="66.89999999999999" y="252.8" width="2.400" height="1.800" fill="#2f8c96"/><path d="M60.500 266h4.500" stroke="#c4c4c4" stroke-width="0.600"/><rect x="65.3" y="261.3" width="9.300" height="9.500" fill="#dcdcdc" stroke="#9a9a9a" stroke-width="0.700"/><rect x="69.89999999999999" y="263.2" width="3.400" height="4.600" fill="#ececec" stroke="#b5b5b5" stroke-width="0.500"/><rect x="66.89999999999999" y="264.8" width="2.400" height="1.800" fill="#2f8c96"/><path d="M60.500 278h4.500" stroke="#c4c4c4" stroke-width="0.600"/><path d="M65.3 277.4l5.400-2.200 4.800 1.300v3.800l-5.400 2.800-4.800-1.900z" fill="#c3c7ca" stroke="#5a626a" stroke-width="0.600"/><path d="M65.3 277.4l4.800 1.700 5.400-2.600M70.1 279.1v4" stroke="#5a626a" stroke-width="0.500" fill="none"/><path d="M66.89999999999999 278.6l5-2.300 1.600.5-5 2.400z" fill="#e6e8ea"/><rect x="72.0" y="272.2" width="2.300" height="4.800" fill="#3a8fc0" stroke="#25628a" stroke-width="0.400"/><path d="M209.6 277.0L212.8 275.4L215 275.8L215.2 272.9L216.2 272.9L216.4 276.4L218.3 279.6L216.6 282.0L213.6 281.8Z" fill="#42ea52" stroke="#5af06a" stroke-width="0.300"/><circle cx="210.800" cy="273.8" r="2.100" fill="#d8dce4" stroke="#8a8e98" stroke-width="0.700"/><circle cx="210.800" cy="273.8" r="0.900" fill="#1c1c28"/><path d="M60.500 290h4.500" stroke="#c4c4c4" stroke-width="0.600"/><path d="M65.3 289.4l5.400-2.200 4.800 1.300v3.800l-5.400 2.800-4.800-1.900z" fill="#c3c7ca" stroke="#5a626a" stroke-width="0.600"/><path d="M65.3 289.4l4.800 1.700 5.400-2.600M70.1 291.1v4" stroke="#5a626a" stroke-width="0.500" fill="none"/><path d="M66.89999999999999 290.6l5-2.300 1.600.5-5 2.400z" fill="#e6e8ea"/><rect x="72.0" y="284.2" width="2.300" height="4.800" fill="#3a8fc0" stroke="#25628a" stroke-width="0.400"/><path d="M209.6 289.0L212.8 287.4L215 287.8L215.2 284.9L216.2 284.9L216.4 288.4L218.3 291.6L216.6 294.0L213.6 293.8Z" fill="#42ea52" stroke="#5af06a" stroke-width="0.300"/><circle cx="210.800" cy="285.8" r="2.100" fill="#d8dce4" stroke="#8a8e98" stroke-width="0.700"/><circle cx="210.800" cy="285.8" r="0.900" fill="#1c1c28"/><path d="M60.500 302h4.500" stroke="#c4c4c4" stroke-width="0.600"/><path d="M65.3 301.4l5.400-2.200 4.800 1.300v3.800l-5.400 2.800-4.800-1.900z" fill="#c3c7ca" stroke="#5a626a" stroke-width="0.600"/><path d="M65.3 301.4l4.800 1.700 5.400-2.600M70.1 303.1v4" stroke="#5a626a" stroke-width="0.500" fill="none"/><path d="M66.89999999999999 302.6l5-2.300 1.600.5-5 2.400z" fill="#e6e8ea"/><rect x="72.0" y="296.2" width="2.300" height="4.800" fill="#3a8fc0" stroke="#25628a" stroke-width="0.400"/><path d="M209.6 301.0L212.8 299.4L215 299.8L215.2 296.9L216.2 296.9L216.4 300.4L218.3 303.6L216.6 306.0L213.6 305.8Z" fill="#42ea52" stroke="#5af06a" stroke-width="0.300"/><circle cx="210.800" cy="297.8" r="2.100" fill="#d8dce4" stroke="#8a8e98" stroke-width="0.700"/><circle cx="210.800" cy="297.8" r="0.900" fill="#1c1c28"/><path d="M60.500 314h4.500" stroke="#c4c4c4" stroke-width="0.600"/><path d="M65.3 313.4l5.400-2.200 4.800 1.300v3.800l-5.400 2.800-4.800-1.900z" fill="#c3c7ca" stroke="#5a626a" stroke-width="0.600"/><path d="M65.3 313.4l4.800 1.700 5.400-2.600M70.1 315.1v4" stroke="#5a626a" stroke-width="0.500" fill="none"/><path d="M66.89999999999999 314.6l5-2.300 1.600.5-5 2.400z" fill="#e6e8ea"/><rect x="72.0" y="308.2" width="2.300" height="4.800" fill="#3a8fc0" stroke="#25628a" stroke-width="0.400"/><path d="M209.6 313.0L212.8 311.4L215 311.8L215.2 308.9L216.2 308.9L216.4 312.4L218.3 315.6L216.6 318.0L213.6 317.8Z" fill="#42ea52" stroke="#5af06a" stroke-width="0.300"/><circle cx="210.800" cy="309.8" r="2.100" fill="#d8dce4" stroke="#8a8e98" stroke-width="0.700"/><circle cx="210.800" cy="309.8" r="0.900" fill="#1c1c28"/><path d="M60.500 326h4.500" stroke="#c4c4c4" stroke-width="0.600"/><path d="M65.3 325.4l5.400-2.200 4.800 1.300v3.800l-5.400 2.800-4.800-1.900z" fill="#c3c7ca" stroke="#5a626a" stroke-width="0.600"/><path d="M65.3 325.4l4.800 1.700 5.400-2.600M70.1 327.1v4" stroke="#5a626a" stroke-width="0.500" fill="none"/><path d="M66.89999999999999 326.6l5-2.300 1.600.5-5 2.400z" fill="#e6e8ea"/><rect x="72.0" y="320.2" width="2.300" height="4.800" fill="#3a8fc0" stroke="#25628a" stroke-width="0.400"/><path d="M209.6 325.0L212.8 323.4L215 323.8L215.2 320.9L216.2 320.9L216.4 324.4L218.3 327.6L216.6 330.0L213.6 329.8Z" fill="#42ea52" stroke="#5af06a" stroke-width="0.300"/><circle cx="210.800" cy="321.8" r="2.100" fill="#d8dce4" stroke="#8a8e98" stroke-width="0.700"/><circle cx="210.800" cy="321.8" r="0.900" fill="#1c1c28"/><path d="M60.500 338h4.500" stroke="#c4c4c4" stroke-width="0.600"/><path d="M65.3 337.4l5.400-2.200 4.800 1.300v3.800l-5.400 2.800-4.800-1.900z" fill="#c3c7ca" stroke="#5a626a" stroke-width="0.600"/><path d="M65.3 337.4l4.800 1.700 5.400-2.600M70.1 339.1v4" stroke="#5a626a" stroke-width="0.500" fill="none"/><path d="M66.89999999999999 338.6l5-2.300 1.600.5-5 2.400z" fill="#e6e8ea"/><rect x="72.0" y="332.2" width="2.300" height="4.800" fill="#3a8fc0" stroke="#25628a" stroke-width="0.400"/><path d="M209.6 337.0L212.8 335.4L215 335.8L215.2 332.9L216.2 332.9L216.4 336.4L218.3 339.6L216.6 342.0L213.6 341.8Z" fill="#42ea52" stroke="#5af06a" stroke-width="0.300"/><circle cx="210.800" cy="333.8" r="2.100" fill="#d8dce4" stroke="#8a8e98" stroke-width="0.700"/><circle cx="210.800" cy="333.8" r="0.900" fill="#1c1c28"/><rect x="48.6" y="348.1" width="3.800" height="3.800" fill="#f8f8f8" stroke="#aaa" stroke-width="0.500"/><path d="M49.5 350h2" stroke="#777" stroke-width="0.500"/><circle cx="58.1" cy="346.6" r="2.700" fill="#c4c6c8" stroke="#8a8c8e" stroke-width="0.600"/><circle cx="62.7" cy="347" r="3" fill="#3a9db5" stroke="#2a7f95" stroke-width="0.500"/><circle cx="61.9" cy="346.2" r="1" fill="#7fc8d8"/><path d="M62.7 350v4.400" stroke="#456" stroke-width="0.900"/><path d="M57.9 350v4.200M59.5 351.2h1.800v2.800h-1.800z" stroke="#456" stroke-width="0.700" fill="none"/><path d="M60.500 362h4.500" stroke="#c4c4c4" stroke-width="0.600"/><path d="M69.5 356.2h2.800v6.400l-1.400 2-1.400-2z" fill="#3a86b0" stroke="#234a66" stroke-width="0.500"/><path d="M69.5 358.6l2.800 1.400M69.5 360.6l2.800 1.400" stroke="#bfe0f0" stroke-width="0.500"/><path d="M67.3 364.2h8" stroke="#667" stroke-width="0.700"/><path d="M70.89999999999999 364.2v2.800" stroke="#333" stroke-width="0.700"/><path d="M209.6 361.0L212.8 359.4L215 359.8L215.2 356.9L216.2 356.9L216.4 360.4L218.3 363.6L216.6 366.0L213.6 365.8Z" fill="#42ea52" stroke="#5af06a" stroke-width="0.300"/><circle cx="210.800" cy="357.8" r="2.100" fill="#d8dce4" stroke="#8a8e98" stroke-width="0.700"/><circle cx="210.800" cy="357.8" r="0.900" fill="#1c1c28"/><rect x="48.6" y="372.1" width="3.800" height="3.800" fill="#f8f8f8" stroke="#aaa" stroke-width="0.500"/><path d="M49.5 374h2" stroke="#777" stroke-width="0.500"/><circle cx="58.1" cy="370.6" r="2.700" fill="#c4c6c8" stroke="#8a8c8e" stroke-width="0.600"/><circle cx="62.7" cy="371" r="3" fill="#3a9db5" stroke="#2a7f95" stroke-width="0.500"/><circle cx="61.9" cy="370.2" r="1" fill="#7fc8d8"/><path d="M62.7 374v4.400" stroke="#456" stroke-width="0.900"/><path d="M57.9 374v4.200M59.5 375.2h1.800v2.800h-1.800z" stroke="#456" stroke-width="0.700" fill="none"/><path d="M60.500 386h4.500" stroke="#c4c4c4" stroke-width="0.600"/><rect x="68.7" y="380.4" width="4.600" height="9.800" fill="#2f7fa8" stroke="#1f4f6a" stroke-width="0.500"/><path d="M68.89999999999999 383l4.200-2.200M68.89999999999999 386.4l4.200-2.400M68.89999999999999 389.6l4.200-2.400" stroke="#d5ecf6" stroke-width="0.900"/><path d="M209.6 385.0L212.8 383.4L215 383.8L215.2 380.9L216.2 380.9L216.4 384.4L218.3 387.6L216.6 390.0L213.6 389.8Z" fill="#42ea52" stroke="#5af06a" stroke-width="0.300"/><circle cx="210.800" cy="381.8" r="2.100" fill="#d8dce4" stroke="#8a8e98" stroke-width="0.700"/><circle cx="210.800" cy="381.8" r="0.900" fill="#1c1c28"/><path d="M211.100 386.6L213.900 391.6L208.600 391.6Z" fill="#dba23c" stroke="#c08a2a" stroke-width="0.300"/><path d="M211.100 388.4v1.800" stroke="#3a2a10" stroke-width="0.700"/><rect x="48.6" y="396.1" width="3.800" height="3.800" fill="#f8f8f8" stroke="#aaa" stroke-width="0.500"/><path d="M49.5 398h2" stroke="#777" stroke-width="0.500"/><circle cx="58.1" cy="394.6" r="2.700" fill="#c4c6c8" stroke="#8a8c8e" stroke-width="0.600"/><circle cx="62.7" cy="395" r="3" fill="#3a9db5" stroke="#2a7f95" stroke-width="0.500"/><circle cx="61.9" cy="394.2" r="1" fill="#7fc8d8"/><path d="M62.7 398v4.400" stroke="#456" stroke-width="0.900"/><path d="M57.9 398v4.200M59.5 399.2h1.800v2.800h-1.800z" stroke="#456" stroke-width="0.700" fill="none"/><path d="M60.500 410h4.500" stroke="#c4c4c4" stroke-width="0.600"/><path d="M69.5 404.2h2.800v6.400l-1.400 2-1.400-2z" fill="#3a86b0" stroke="#234a66" stroke-width="0.500"/><path d="M69.5 406.6l2.800 1.400M69.5 408.6l2.800 1.400" stroke="#bfe0f0" stroke-width="0.500"/><path d="M67.3 412.2h8" stroke="#667" stroke-width="0.700"/><path d="M70.89999999999999 412.2v2.800" stroke="#333" stroke-width="0.700"/><path d="M209.6 409.0L212.8 407.4L215 407.8L215.2 404.9L216.2 404.9L216.4 408.4L218.3 411.6L216.6 414.0L213.6 413.8Z" fill="#42ea52" stroke="#5af06a" stroke-width="0.300"/><circle cx="210.800" cy="405.8" r="2.100" fill="#d8dce4" stroke="#8a8e98" stroke-width="0.700"/><circle cx="210.800" cy="405.8" r="0.900" fill="#1c1c28"/><rect x="48.6" y="420.1" width="3.800" height="3.800" fill="#f8f8f8" stroke="#aaa" stroke-width="0.500"/><path d="M49.5 422h2" stroke="#777" stroke-width="0.500"/><circle cx="58.1" cy="418.6" r="2.700" fill="#c4c6c8" stroke="#8a8c8e" stroke-width="0.600"/><circle cx="62.7" cy="419" r="3" fill="#3a9db5" stroke="#2a7f95" stroke-width="0.500"/><circle cx="61.9" cy="418.2" r="1" fill="#7fc8d8"/><path d="M62.7 422v4.400" stroke="#456" stroke-width="0.900"/><path d="M57.9 422v4.200M59.5 423.2h1.800v2.800h-1.800z" stroke="#456" stroke-width="0.700" fill="none"/><path d="M60.500 434h4.500" stroke="#c4c4c4" stroke-width="0.600"/><rect x="68.7" y="428.4" width="4.600" height="9.800" fill="#2f7fa8" stroke="#1f4f6a" stroke-width="0.500"/><path d="M68.89999999999999 431l4.200-2.200M68.89999999999999 434.4l4.200-2.400M68.89999999999999 437.6l4.200-2.400" stroke="#d5ecf6" stroke-width="0.900"/><path d="M209.6 433.0L212.8 431.4L215 431.8L215.2 428.9L216.2 428.9L216.4 432.4L218.3 435.6L216.6 438.0L213.6 437.8Z" fill="#42ea52" stroke="#5af06a" stroke-width="0.300"/><circle cx="210.800" cy="429.8" r="2.100" fill="#d8dce4" stroke="#8a8e98" stroke-width="0.700"/><circle cx="210.800" cy="429.8" r="0.900" fill="#1c1c28"/><path d="M60.500 446h4.500" stroke="#c4c4c4" stroke-width="0.600"/><path d="M65.3 445.4l5.400-2.200 4.800 1.300v3.800l-5.400 2.800-4.800-1.900z" fill="#c3c7ca" stroke="#5a626a" stroke-width="0.600"/><path d="M65.3 445.4l4.800 1.700 5.400-2.600M70.1 447.1v4" stroke="#5a626a" stroke-width="0.500" fill="none"/><path d="M66.89999999999999 446.6l5-2.300 1.600.5-5 2.400z" fill="#e6e8ea"/><rect x="72.0" y="440.2" width="2.300" height="4.800" fill="#3a8fc0" stroke="#25628a" stroke-width="0.400"/><path d="M209.6 445.0L212.8 443.4L215 443.8L215.2 440.9L216.2 440.9L216.4 444.4L218.3 447.6L216.6 450.0L213.6 449.8Z" fill="#42ea52" stroke="#5af06a" stroke-width="0.300"/><circle cx="210.800" cy="441.8" r="2.100" fill="#d8dce4" stroke="#8a8e98" stroke-width="0.700"/><circle cx="210.800" cy="441.8" r="0.900" fill="#1c1c28"/><path d="M60.500 458h4.500" stroke="#c4c4c4" stroke-width="0.600"/><path d="M65.3 457.4l5.400-2.200 4.800 1.300v3.800l-5.400 2.800-4.800-1.900z" fill="#c3c7ca" stroke="#5a626a" stroke-width="0.600"/><path d="M65.3 457.4l4.800 1.700 5.400-2.600M70.1 459.1v4" stroke="#5a626a" stroke-width="0.500" fill="none"/><path d="M66.89999999999999 458.6l5-2.300 1.600.5-5 2.400z" fill="#e6e8ea"/><rect x="72.0" y="452.2" width="2.300" height="4.800" fill="#3a8fc0" stroke="#25628a" stroke-width="0.400"/><path d="M209.6 457.0L212.8 455.4L215 455.8L215.2 452.9L216.2 452.9L216.4 456.4L218.3 459.6L216.6 462.0L213.6 461.8Z" fill="#42ea52" stroke="#5af06a" stroke-width="0.300"/><circle cx="210.800" cy="453.8" r="2.100" fill="#d8dce4" stroke="#8a8e98" stroke-width="0.700"/><circle cx="210.800" cy="453.8" r="0.900" fill="#1c1c28"/><rect x="48.6" y="468.1" width="3.800" height="3.800" fill="#f8f8f8" stroke="#aaa" stroke-width="0.500"/><path d="M49.5 470h2" stroke="#777" stroke-width="0.500"/><circle cx="58.1" cy="466.6" r="2.700" fill="#c4c6c8" stroke="#8a8c8e" stroke-width="0.600"/><circle cx="62.7" cy="467" r="3" fill="#3a9db5" stroke="#2a7f95" stroke-width="0.500"/><circle cx="61.9" cy="466.2" r="1" fill="#7fc8d8"/><path d="M62.7 470v4.400" stroke="#456" stroke-width="0.900"/><path d="M57.9 470v4.200M59.5 471.2h1.800v2.800h-1.800z" stroke="#456" stroke-width="0.700" fill="none"/><path d="M60.500 482h4.500" stroke="#c4c4c4" stroke-width="0.600"/><rect x="68.7" y="476.4" width="4.600" height="9.800" fill="#2f7fa8" stroke="#1f4f6a" stroke-width="0.500"/><path d="M68.89999999999999 479l4.200-2.200M68.89999999999999 482.4l4.200-2.400M68.89999999999999 485.6l4.200-2.400" stroke="#d5ecf6" stroke-width="0.900"/><path d="M209.6 481.0L212.8 479.4L215 479.8L215.2 476.9L216.2 476.9L216.4 480.4L218.3 483.6L216.6 486.0L213.6 485.8Z" fill="#42ea52" stroke="#5af06a" stroke-width="0.300"/><circle cx="210.800" cy="477.8" r="2.100" fill="#d8dce4" stroke="#8a8e98" stroke-width="0.700"/><circle cx="210.800" cy="477.8" r="0.900" fill="#1c1c28"/><path d="M211.100 482.6L213.900 487.6L208.600 487.6Z" fill="#dba23c" stroke="#c08a2a" stroke-width="0.300"/><path d="M211.100 484.4v1.800" stroke="#3a2a10" stroke-width="0.700"/><path d="M60.500 187V230" stroke="#c4c4c4" stroke-width="0.600"/><path d="M60.500 247V338" stroke="#c4c4c4" stroke-width="0.600"/><path d="M60.500 355V362" stroke="#c4c4c4" stroke-width="0.600"/><path d="M60.500 379V386" stroke="#c4c4c4" stroke-width="0.600"/><path d="M60.500 403V410" stroke="#c4c4c4" stroke-width="0.600"/><path d="M60.500 427V458" stroke="#c4c4c4" stroke-width="0.600"/><path d="M60.500 475V482" stroke="#c4c4c4" stroke-width="0.600"/></svg>
<div class="tree">
<div class="t" style="left:48.70px;top:107.00px;font-size:6.2px;color:#1e1e1e;transform:scaleX(0.902);transform-origin:0 0;">MACHINING PHASE</div>
<div class="t" style="left:58.70px;top:119.00px;font-size:6.2px;color:#1e1e1e;transform:scaleX(0.885);transform-origin:0 0;">Ferrure CampusFab RCA</div>
<div class="t" style="left:68.70px;top:131.00px;font-size:6.2px;color:#1e1e1e;transform:scaleX(0.853);transform-origin:0 0;">SELECT TOOLS COMMENTS</div>
<div class="t" style="left:68.70px;top:143.00px;font-size:6.2px;color:#1e1e1e;transform:scaleX(0.865);transform-origin:0 0;">CALL  VICE +ROBOT ABB</div>
<div class="t" style="left:68.70px;top:155.00px;font-size:6.2px;color:#1e1e1e;transform:scaleX(0.861);transform-origin:0 0;">PUT ORIGIN</div>
<div class="t" style="left:68.70px;top:167.00px;font-size:6.2px;color:#1e1e1e;transform:scaleX(0.830);transform-origin:0 0;">CREATE RCA FILES</div>
<div class="t" style="left:68.70px;top:179.00px;font-size:6.2px;color:#1e1e1e;transform:scaleX(0.904);transform-origin:0 0;">MOUNT (PALPEUR DIAM5 A (PALP...</div>
<div class="t" style="left:78.70px;top:191.00px;font-size:6.2px;color:#1e1e1e;transform:scaleX(0.862);transform-origin:0 0;">ROTATING PALLET de 86.5</div>
<div class="t" style="left:78.70px;top:203.00px;font-size:6.2px;color:#1e1e1e;transform:scaleX(0.871);transform-origin:0 0;">CALCUL HIGHT OF PALETTE=R30</div>
<div class="t" style="left:78.70px;top:215.00px;font-size:6.2px;color:#1e1e1e;transform:scaleX(0.839);transform-origin:0 0;">CONTACT SENSOR</div>
<div class="t" style="left:78.70px;top:227.00px;font-size:6.2px;color:#1e1e1e;transform:scaleX(0.830);transform-origin:0 0;">POSITIONNING =R34</div>
<div class="t" style="left:68.70px;top:239.00px;font-size:6.2px;color:#1e1e1e;transform:scaleX(0.870);transform-origin:0 0;">MOUNT (FRAISE D16R2 A (T11 FR ...</div>
<div class="t" style="left:78.70px;top:251.00px;font-size:6.2px;color:#1e1e1e;transform:scaleX(0.859);transform-origin:0 0;">VERIFICATION CUTTER  D16R2&gt;...</div>
<div class="t" style="left:78.70px;top:263.00px;font-size:6.2px;color:#1e1e1e;transform:scaleX(0.897);transform-origin:0 0;">COOLNT/FLOOD</div>
<div class="t" style="left:78.70px;top:275.00px;font-size:6.2px;color:#1e1e1e;transform:scaleX(0.895);transform-origin:0 0;">ROUGH -1</div>
<div class="t" style="left:78.70px;top:287.00px;font-size:6.2px;color:#1e1e1e;transform:scaleX(0.895);transform-origin:0 0;">ROUGH -2</div>
<div class="t" style="left:78.70px;top:299.00px;font-size:6.2px;color:#1e1e1e;transform:scaleX(0.854);transform-origin:0 0;">ROUGH EXTERNAL PROFIL</div>
<div class="t" style="left:78.70px;top:311.00px;font-size:6.2px;color:#1e1e1e;transform:scaleX(0.852);transform-origin:0 0;">FINISH EXTERNAL PROFIL</div>
<div class="t" style="left:78.70px;top:323.00px;font-size:6.2px;color:#1e1e1e;transform:scaleX(0.871);transform-origin:0 0;">MILL FACE OF DRILLING</div>
<div class="t" style="left:78.70px;top:335.00px;font-size:6.2px;color:#1e1e1e;transform:scaleX(0.871);transform-origin:0 0;">MILL FACE OF DRILLING FINISH</div>
<div class="t" style="left:68.70px;top:347.00px;font-size:6.2px;color:#1e1e1e;transform:scaleX(0.895);transform-origin:0 0;">MOUNT (T5001 A (T5001) / T3 FORE...</div>
<div class="t" style="left:78.70px;top:359.00px;font-size:6.2px;color:#1e1e1e;transform:scaleX(0.908);transform-origin:0 0;">DRILL HOLE DIAM8</div>
<div class="t" style="left:68.70px;top:371.00px;font-size:6.2px;color:#1e1e1e;transform:scaleX(0.906);transform-origin:0 0;">MOUNT (MILL D10R0.5 A (T12 FR D...</div>
<div class="t" style="left:78.70px;top:383.00px;font-size:6.2px;color:#1e1e1e;transform:scaleX(0.895);transform-origin:0 0;">HOLE DIAM 43 HELIX</div>
<div class="t" style="left:68.70px;top:395.00px;font-size:6.2px;color:#1e1e1e;transform:scaleX(0.901);transform-origin:0 0;">MOUNT (T3012 A (T3012.1) / T0 Rea...</div>
<div class="t" style="left:78.70px;top:407.00px;font-size:6.2px;color:#1e1e1e;transform:scaleX(0.917);transform-origin:0 0;">REAMING HOLE DIAM8</div>
<div class="t" style="left:68.70px;top:419.00px;font-size:6.2px;color:#1e1e1e;transform:scaleX(0.918);transform-origin:0 0;">Tool Change.12 (MILL D10R0.5 A (T...</div>
<div class="t" style="left:78.70px;top:431.00px;font-size:6.2px;color:#1e1e1e;transform:scaleX(0.881);transform-origin:0 0;">FINISH HOLE DIAM 43 CIRCULA...</div>
<div class="t" style="left:78.70px;top:443.00px;font-size:6.2px;color:#1e1e1e;transform:scaleX(0.852);transform-origin:0 0;">POCKETING FRONT</div>
<div class="t" style="left:78.70px;top:455.00px;font-size:6.2px;color:#1e1e1e;transform:scaleX(0.869);transform-origin:0 0;">POCKETING BEHIND</div>
<div class="t" style="left:68.70px;top:467.00px;font-size:6.2px;color:#1e1e1e;transform:scaleX(0.906);transform-origin:0 0;">Tool Change.13 (T2047 A (T2047.1) /...</div>
<div class="t" style="left:78.70px;top:479.00px;font-size:6.2px;color:#1e1e1e;transform:scaleX(0.950);transform-origin:0 0;">Circular Milling.3</div>
</div>
<div class="abs" id="right"></div>
<div class="abs" style="left:790px;top:49px;width:170px;height:8px;background:#f7f7f8"></div>
<div class="abs" style="left:790px;top:57px;width:170px;height:11.500px;background:#cfcfd0"></div>
<div class="abs" style="left:790px;top:57px;width:82.500px;height:12px;background:#f3f2f4"></div>
<div class="t" style="left:802.50px;top:60.00px;font-size:6.5px;color:#3a3a3a;transform:scaleX(0.946);transform-origin:0 0;-webkit-text-stroke:0.08px currentColor;">Milling Machining Wizard</div>
<svg class="abs" style="left:790px;top:49px" width="170" height="20" viewBox="790 49 170 20" fill="none"><path d="M794.300 51.300l1.700 2-1.700 2" stroke="#555" stroke-width="0.700"/><rect x="792.800" y="59.400" width="7.600" height="7" fill="#e6edf2" stroke="#8aa" stroke-width="0.500"/><path d="M792.800 61.400h7.600M795.300 61.400v5" stroke="#6a9ab5" stroke-width="0.600"/><rect x="796.500" y="62.600" width="3" height="3" fill="#9cc"/><path d="M952 60.300l4 4M956 60.300l-4 4" stroke="#555" stroke-width="0.800"/></svg>
<div class="abs" style="left:795px;top:70.7px;width:162.700px;height:12.600px;background:#e4e4e6;border-radius:1px"></div>
<div class="t" style="left:817.20px;top:74.00px;font-size:6.3px;color:#222;transform:scaleX(0.908);transform-origin:0 0;font-weight:bold;-webkit-text-stroke:0.04px currentColor;">Product</div>
<div class="abs" style="left:795px;top:87.1px;width:162.700px;height:12.600px;background:#e4e4e6;border-radius:1px"></div>
<div class="t" style="left:817.20px;top:91.00px;font-size:6.3px;color:#222;transform:scaleX(0.899);transform-origin:0 0;font-weight:bold;-webkit-text-stroke:0.04px currentColor;">Resource Configuration</div>
<div class="abs" style="left:795px;top:103.5px;width:162.700px;height:12.600px;background:#e4e4e6;border-radius:1px"></div>
<div class="t" style="left:817.20px;top:107.00px;font-size:6.3px;color:#222;transform:scaleX(0.926);transform-origin:0 0;font-weight:bold;-webkit-text-stroke:0.04px currentColor;">Part Operation</div>
<div class="abs" style="left:795px;top:119.9px;width:162.700px;height:12.600px;background:#e4e4e6;border-radius:1px"></div>
<div class="t" style="left:817.20px;top:123.00px;font-size:6.3px;color:#222;transform:scaleX(0.938);transform-origin:0 0;font-weight:bold;-webkit-text-stroke:0.04px currentColor;">Programming Automation</div>
<div class="abs" style="left:795px;top:136.3px;width:162.700px;height:12.600px;background:#e4e4e6;border-radius:1px"></div>
<div class="t" style="left:817.20px;top:140.00px;font-size:6.3px;color:#222;transform:scaleX(0.857);transform-origin:0 0;font-weight:bold;-webkit-text-stroke:0.04px currentColor;">Tools</div>
<div class="abs" style="left:795px;top:152.7px;width:162.700px;height:12.600px;background:#e4e4e6;border-radius:1px"></div>
<div class="t" style="left:817.20px;top:156.00px;font-size:6.3px;color:#222;transform:scaleX(0.928);transform-origin:0 0;font-weight:bold;-webkit-text-stroke:0.04px currentColor;">Programming</div>
<div class="abs" style="left:795px;top:169.7px;width:162.700px;height:12.600px;background:#e4e4e6;border-radius:1px"></div>
<div class="t" style="left:817.20px;top:173.00px;font-size:6.3px;color:#222;transform:scaleX(0.917);transform-origin:0 0;font-weight:bold;-webkit-text-stroke:0.04px currentColor;">Simulation</div>
<div class="abs" style="left:795px;top:272.7px;width:162.700px;height:12.600px;background:#e4e4e6;border-radius:1px"></div>
<div class="t" style="left:817.20px;top:276.00px;font-size:6.3px;color:#222;transform:scaleX(0.890);transform-origin:0 0;font-weight:bold;-webkit-text-stroke:0.04px currentColor;">Generate NC Code</div>
<svg class="abs" style="left:790px;top:68px" width="170" height="225" viewBox="790 68 170 225" fill="none"><path d="M799.600 75.4l2.400 1.600-2.400 1.600z" fill="#777"/><path d="M808.300 77.0l2.200 2.200 4.300-4.800" stroke="#3aa935" stroke-width="1.300"/><path d="M799.600 91.8l2.400 1.600-2.400 1.600z" fill="#777"/><path d="M808.300 93.39999999999999l2.200 2.200 4.300-4.800" stroke="#3aa935" stroke-width="1.300"/><path d="M799.600 108.2l2.400 1.600-2.400 1.600z" fill="#777"/><path d="M808.300 109.8l2.200 2.200 4.300-4.800" stroke="#3aa935" stroke-width="1.300"/><path d="M799.600 124.60000000000001l2.400 1.600-2.400 1.600z" fill="#777"/><path d="M799.600 141.00000000000003l2.400 1.600-2.400 1.600z" fill="#777"/><path d="M808.300 142.60000000000002l2.200 2.200 4.300-4.800" stroke="#3aa935" stroke-width="1.300"/><path d="M799.600 157.4l2.400 1.600-2.400 1.600z" fill="#777"/><path d="M808.300 159.0l2.200 2.200 4.300-4.800" stroke="#3aa935" stroke-width="1.300"/><path d="M799 175.0h3.200l-1.600 2.400z" fill="#222"/><path d="M799.600 277.4l2.400 1.600-2.400 1.600z" fill="#777"/><path d="M808.300 279.0l2.200 2.200 4.300-4.800" stroke="#3aa935" stroke-width="1.300"/></svg>
<div class="abs" style="left:795px;top:182.300px;width:162.700px;height:88.200px;background:#f1f0f2;border:0.600px solid #dedee0"></div>
<div class="t" style="left:805.00px;top:190.00px;font-size:6.3px;color:#333;transform:scaleX(0.950);transform-origin:0 0;-webkit-text-stroke:0.12px currentColor;">In this step, compute and simulate your tool path. You</div>
<div class="t" style="left:805.00px;top:197.00px;font-size:6.3px;color:#333;transform:scaleX(0.943);transform-origin:0 0;-webkit-text-stroke:0.12px currentColor;">can also launch a simulation by clicking the compass</div>
<div class="t" style="left:805.00px;top:205.00px;font-size:6.3px;color:#333;transform:scaleX(0.952);transform-origin:0 0;-webkit-text-stroke:0.12px currentColor;">play button.</div>
<div class="t" style="left:824.70px;top:217.00px;font-size:6.3px;color:#222;transform:scaleX(0.863);transform-origin:0 0;font-weight:bold;-webkit-text-stroke:0.04px currentColor;">Collision checking</div>
<div class="t" style="left:824.70px;top:225.00px;font-size:6.3px;color:#333;transform:scaleX(0.937);transform-origin:0 0;-webkit-text-stroke:0.12px currentColor;">Activate the probes to check the dynamic clash,</div>
<div class="t" style="left:824.70px;top:233.00px;font-size:6.3px;color:#333;transform:scaleX(0.927);transform-origin:0 0;-webkit-text-stroke:0.12px currentColor;">the clash stock or the clash machine.</div>
<div class="t" style="left:824.70px;top:246.00px;font-size:6.3px;color:#222;transform:scaleX(0.893);transform-origin:0 0;font-weight:bold;-webkit-text-stroke:0.04px currentColor;">Compute and Check Tool Path</div>
<div class="t" style="left:824.70px;top:254.00px;font-size:6.3px;color:#333;transform:scaleX(0.916);transform-origin:0 0;-webkit-text-stroke:0.12px currentColor;">Compute and Check Tool Path</div>
<svg class="abs" style="left:804px;top:215px" width="20" height="48" viewBox="804 215 20 48" fill="none"><rect x="805.200" y="216.500" width="16" height="16" fill="#fafafa" stroke="#d5d5d5" stroke-width="0.600"/><rect x="805.200" y="244.500" width="16" height="16.300" fill="#fafafa" stroke="#d5d5d5" stroke-width="0.600"/><path d="M809 224.500l4-2.500 5 1.500v5l-4.500 2.500-4.500-2z" fill="#eee" stroke="#999" stroke-width="0.500"/><circle cx="813.500" cy="226.500" r="2.200" fill="#f5f5f5" stroke="#aaa" stroke-width="0.400"/><path d="M812 217.500l1.600 2.600 1.400-2 .3 2.600 2.400-.6-1.800 2 1.800 1.400-3 .2-1.600 1.600-.8-2.400-2.600-.4 2-1.600z" fill="#f39a2b" stroke="#d9641a" stroke-width="0.300"/><path d="M808.500 246.500v8.500c0 2.500 2 3.500 4 3.500M811.300 247v6.500c0 2 1.500 3 3 3" stroke="#2f6f95" stroke-width="0.700"/><path d="M808.500 256l6 3.500h5" stroke="#999" stroke-width="0.500"/><circle cx="816.800" cy="256.700" r="2.200" fill="#fff" stroke="#334" stroke-width="0.600"/><path d="M816 255.500l2 1.200-2 1.200z" fill="#223"/></svg>
<div class="abs" style="left:796px;top:456px;width:5.600px;height:5.600px;background:#fcfcfc;border:0.600px solid #d4d4d6"></div>
<div class="t" style="left:807.80px;top:456.00px;font-size:6.3px;color:#222;transform:scaleX(0.931);transform-origin:0 0;font-weight:bold;-webkit-text-stroke:0.04px currentColor;">Do not show at startup</div>
<div class="abs" style="left:795.400px;top:464.400px;width:161.400px;height:27.200px;background:#dcdcde"></div>
<svg class="abs" style="left:796px;top:466px" width="24" height="24" viewBox="796 466 24 24"><defs><radialGradient id="gY" cx="0.4" cy="0.35" r="0.700"><stop offset="0" stop-color="#faf0a0"/><stop offset="0.600" stop-color="#ecd552"/><stop offset="1" stop-color="#d2b232"/></radialGradient></defs><circle cx="807.800" cy="477.500" r="9.700" fill="url(#gY)" stroke="#e6cf55" stroke-width="0.500"/><path d="M807.500 472.500h1.400v5.500h-1.400zM804.300 478.600h7.800v1.200h-7.800z" fill="#b89a2a"/></svg>
<div class="t" style="left:820.70px;top:469.00px;font-size:6.4px;color:#444;transform:scaleX(0.892);transform-origin:0 0;-webkit-text-stroke:0.1px currentColor;">Questions ? What's New ?</div>
<div class="t" style="left:820.70px;top:480.00px;font-size:6.4px;color:#4a9fd0;transform:scaleX(0.914);transform-origin:0 0;-webkit-text-stroke:0.08px currentColor;text-decoration:underline;">Join the DELMIA Fabrication Community</div>
<div class="abs" style="left:780.500px;top:278px;width:9px;height:16px;background:#f6f6f6;border:0.500px solid #ccc"></div>
<div class="abs" style="left:780.500px;top:295.500px;width:9px;height:15px;background:#f6f6f6;border:0.500px solid #ccc"></div>
<svg class="abs" style="left:780px;top:278px" width="10" height="33" viewBox="780 278 10 33"><path d="M782 283.500l3.500 2-3.500 2z" fill="#222"/><path d="M785.500 284.500h2.500v3.500h-2.500z" fill="#4a8fb5"/><ellipse cx="785" cy="302.500" rx="3" ry="2" fill="#999" stroke="#666" stroke-width="0.400"/></svg>
<div class="abs" style="left:405px;top:232.500px;width:250px;height:184.500px;background:#f0f0f2;border:0.600px solid #9a9a9a;border-radius:1.500px;box-shadow:0 1px 4px rgba(0,0,0,0.35)"></div>
<div class="abs" style="left:405.600px;top:233px;width:248.800px;height:11px;background:#fbfbfb;border-bottom:0.500px solid #e0e0e0"></div>
<div class="t" style="left:410.70px;top:236.00px;font-size:6.4px;color:#444;transform:scaleX(0.926);transform-origin:0 0;-webkit-text-stroke:0.08px currentColor;">NC Documentation</div>
<div class="abs" style="left:405.600px;top:397px;width:248.800px;height:19.500px;background:#f7f7f8;border-top:0.500px solid #dcdcdc"></div>
<svg class="abs" style="left:405px;top:233px" width="250" height="36" viewBox="405 233 250 36" fill="none"><path d="M646.400 236l4.400 4.400M650.800 236l-4.400 4.400" stroke="#444" stroke-width="0.800"/><rect x="412.600" y="252" width="11.600" height="11.600" fill="#f6f6f7" stroke="#dadada" stroke-width="0.500"/><rect x="425.800" y="252" width="11.600" height="11.600" fill="#f6f6f7" stroke="#dadada" stroke-width="0.500"/><path d="M414.500 253.500h4l2 2v5.500h-6z" fill="#fafafa" stroke="#aaa" stroke-width="0.600"/><circle cx="419.800" cy="259" r="2" stroke="#aaa" stroke-width="0.700" fill="#f4f4f4"/><path d="M421.200 260.600l1.800 2" stroke="#aaa" stroke-width="0.900"/><path d="M429 254h3.500l1.500 1.500v4h-5z" fill="#fafafa" stroke="#bbb" stroke-width="0.500"/><path d="M431.500 256.500v4l1.200-.8 1.200 2.500 1-.5-1.200-2.400 1.600-.2z" fill="#ddd" stroke="#999" stroke-width="0.500"/><path d="M449.600 252.800h3v3.600h2.200l-3.700 3.600-3.700-3.600h2.200z" fill="#a9bdd4" stroke="#9ab0ca" stroke-width="0.400"/><path d="M445.600 259.500v3.700h11v-3.700h-2v1.700h-7v-1.700z" fill="#a9bdd4"/><rect x="638" y="253" width="10.200" height="10.200" fill="#fdfdfd" stroke="#d8d8d8" stroke-width="0.500"/><circle cx="642.400" cy="257.300" r="2.500" stroke="#1f5f85" stroke-width="0.900" fill="#fff"/><path d="M644.300 259.200l2.300 2.400" stroke="#1f5f85" stroke-width="1.100"/></svg>
<div class="abs" style="left:411px;top:267.300px;width:149.500px;height:9.700px;background:#f5f5f6;border:0.500px solid #dcdcdc"></div>
<div class="abs" style="left:560.400px;top:267.300px;width:23.200px;height:9.900px;background:#f5f5f6;border:0.500px solid #dcdcdc;border-bottom:1.300px solid #3d7ea8"></div>
<div class="abs" style="left:583.600px;top:267.300px;width:58.400px;height:9.700px;background:#f5f5f6;border:0.500px solid #dcdcdc"></div>
<div class="t" style="left:416.00px;top:269.00px;font-size:6.3px;color:#555;transform:scaleX(0.918);transform-origin:0 0;-webkit-text-stroke:0.08px currentColor;">Display Name</div>
<div class="t" style="left:566.00px;top:269.00px;font-size:6.3px;color:#555;transform:scaleX(0.864);transform-origin:0 0;-webkit-text-stroke:0.08px currentColor;">Type</div>
<div class="t" style="left:589.00px;top:269.00px;font-size:6.3px;color:#555;transform:scaleX(0.940);transform-origin:0 0;-webkit-text-stroke:0.08px currentColor;">Published Documen</div>
<div class="abs" style="left:560.400px;top:277.200px;width:81.600px;height:97px;background:#e9e9eb"></div>
<div class="abs" style="left:642.800px;top:276px;width:5.500px;height:22.700px;background:#c6c6c8"></div>
<div class="abs" style="left:420px;top:377.200px;width:177px;height:5.600px;background:#cdcdcf"></div>
<svg class="abs" style="left:410px;top:266px" width="242" height="120" viewBox="410 266 242 120"><path d="M644.300 271.600h3l-1.500-2.200zM644.300 370.200h3l-1.500 2.200zM413.300 380l2.200-1.600v3.200zM638 380l-2.200-1.600v3.200z" fill="#444"/></svg>
<div class="abs" style="left:410.700px;top:350px;width:149.700px;height:11px;background:#a9a9ab"></div>
<svg class="abs" style="left:410px;top:277px" width="150" height="98" viewBox="410 277 150 98" fill="none"><path d="M424.500 288v56M424.500 296h5M424.500 308h5M424.500 320h5M424.500 332h5M434.500 349v26M434.500 367.700h5" stroke="#bbb" stroke-width="0.600"/><rect x="412.500" y="282.1" width="3.800" height="3.800" fill="#f8f8f8" stroke="#aaa" stroke-width="0.500"/><path d="M413.400 284h2" stroke="#777" stroke-width="0.500"/><rect x="420.300" y="278.6" width="8.400" height="10" fill="#e8f0f4" stroke="#456" stroke-width="0.600"/><rect x="421.300" y="279.6" width="2" height="1.800" fill="#2f7fa5"/><path d="M424.100 280.5h3.800" stroke="#678" stroke-width="0.600"/><rect x="421.300" y="282.70000000000005" width="2" height="1.800" fill="#2f7fa5"/><path d="M424.100 283.6h3.800" stroke="#678" stroke-width="0.600"/><rect x="421.300" y="285.8" width="2" height="1.800" fill="#2f7fa5"/><path d="M424.100 286.7h3.800" stroke="#678" stroke-width="0.600"/><path d="M430.8 291.2h4.800l2.200 2.200v7.200h-7z" fill="#fcfcfc" stroke="#5a5a5a" stroke-width="0.600"/><path d="M430.8 303.2h4.800l2.200 2.200v7.200h-7z" fill="#fcfcfc" stroke="#5a5a5a" stroke-width="0.600"/><path d="M430.8 315.2h4.800l2.200 2.200v7.200h-7z" fill="#fcfcfc" stroke="#5a5a5a" stroke-width="0.600"/><path d="M430.8 327.2h4.800l2.200 2.200v7.200h-7z" fill="#fcfcfc" stroke="#5a5a5a" stroke-width="0.600"/><rect x="422.600" y="342.1" width="3.800" height="3.800" fill="#f8f8f8" stroke="#aaa" stroke-width="0.500"/><path d="M423.500 344h2" stroke="#777" stroke-width="0.500"/><rect x="430.200" y="338.7" width="9.400" height="9.600" fill="#4fc3c8" stroke="#1f8f99" stroke-width="0.500"/><path d="M433.400 338.7v9.600M436.400 338.7v9.600" stroke="#18707a" stroke-width="0.800"/><path d="M431 342h8M431 345.4h8" stroke="#bfeef0" stroke-width="0.500"/><path d="M441.2 350.9h4.800l2.200 2.200v7.200h-7z" fill="#fcfcfc" stroke="#5a5a5a" stroke-width="0.600"/><path d="M441.2 362.9h4.800l2.200 2.200v7.200h-7z" fill="#fcfcfc" stroke="#5a5a5a" stroke-width="0.600"/><path d="M441.200 374.800v-1.200h4.800" stroke="#444" stroke-width="0.700"/></svg>
<div class="t" style="left:432.80px;top:281.00px;font-size:6.2px;color:#1e1e1e;transform:scaleX(0.890);transform-origin:0 0;">Ferrure CampusFab RCA [Ferrure_CampusFab_...</div>
<div class="t" style="left:442.60px;top:293.00px;font-size:6.2px;color:#1e1e1e;transform:scaleX(0.885);transform-origin:0 0;">Ferrure_CampusFab_RCA.CATNCCode</div>
<div class="t" style="left:563.00px;top:291.00px;font-size:6.2px;color:#484848;transform:scaleX(0.900);transform-origin:0 0;-webkit-text-stroke:0.16px currentColor;">CATNC</div>
<div class="t" style="left:442.60px;top:305.00px;font-size:6.2px;color:#1e1e1e;transform:scaleX(0.885);transform-origin:0 0;">Ferrure_CampusFab_RCA.LOG</div>
<div class="t" style="left:563.00px;top:303.00px;font-size:6.2px;color:#484848;transform:scaleX(0.900);transform-origin:0 0;-webkit-text-stroke:0.16px currentColor;">LOG</div>
<div class="t" style="left:442.60px;top:317.00px;font-size:6.2px;color:#1e1e1e;transform:scaleX(0.885);transform-origin:0 0;">Ferrure_CampusFab_RCA_I.LOG</div>
<div class="t" style="left:563.00px;top:315.00px;font-size:6.2px;color:#484848;transform:scaleX(0.900);transform-origin:0 0;-webkit-text-stroke:0.16px currentColor;">LOG</div>
<div class="t" style="left:442.60px;top:329.00px;font-size:6.2px;color:#1e1e1e;transform:scaleX(0.885);transform-origin:0 0;">Ferrure_CampusFab_RCA_I.aptsource</div>
<div class="t" style="left:563.00px;top:327.00px;font-size:6.2px;color:#484848;transform:scaleX(0.900);transform-origin:0 0;-webkit-text-stroke:0.16px currentColor;">aptsour</div>
<div class="t" style="left:442.60px;top:341.00px;font-size:6.2px;color:#1e1e1e;transform:scaleX(0.899);transform-origin:0 0;">NC Documentation_Ferrure CampusFab RC...</div>
<div class="t" style="left:452.80px;top:353.00px;font-size:6.2px;color:#1e1e1e;transform:scaleX(0.900);transform-origin:0 0;">Ferrure CampusFab RCA.html</div>
<div class="t" style="left:563.00px;top:350.00px;font-size:6.2px;color:#484848;transform:scaleX(0.900);transform-origin:0 0;-webkit-text-stroke:0.16px currentColor;">html</div>
<div class="t" style="left:452.80px;top:365.00px;font-size:6.2px;color:#1e1e1e;transform:scaleX(0.885);transform-origin:0 0;">Ferrure CampusFab RCA_doc.LOG</div>
<div class="t" style="left:563.00px;top:362.00px;font-size:6.2px;color:#484848;transform:scaleX(0.900);transform-origin:0 0;-webkit-text-stroke:0.16px currentColor;">LOG</div>
<div class="t" style="left:412.60px;top:386.00px;font-size:6.2px;color:#555;transform:scaleX(0.932);transform-origin:0 0;-webkit-text-stroke:0.1px currentColor;">30/30 items displayed | 0 items selected</div>
<div class="abs" style="left:620.500px;top:401.400px;width:29.500px;height:12.200px;background:#fbfbfb;border:0.600px solid #c9c9c9;border-radius:1px"></div>
<div class="t" style="left:628.50px;top:405.00px;font-size:6.3px;color:#444;transform:scaleX(0.838);transform-origin:0 0;-webkit-text-stroke:0.1px currentColor;">Close</div>
<svg class="abs" style="left:648px;top:410px" width="7" height="7" viewBox="648 410 7 7"><path d="M653.500 413l-2.500 2.500M653.500 414.800l-.8.800" stroke="#aaa" stroke-width="0.500"/></svg>
<svg class="abs" style="left:514px;top:351px" width="10" height="14" viewBox="514 351 10 14"><path d="M516.600 353v9l2-1.800 1.400 3.200 1.400-.6-1.400-3.100h2.700z" fill="#fff" stroke="#111" stroke-width="0.700" stroke-linejoin="round"/></svg>
<div class="abs" style="left:215px;top:508.800px;width:529.500px;height:31.200px;background:#f2f2f4"></div>
<div class="abs" style="left:215px;top:508.800px;width:9.500px;height:31.200px;background:#f8f8f9;border-right:0.600px solid #d0d0d0"></div>
<div class="abs" style="left:224.400px;top:498.300px;width:520px;height:10.500px;background:#d5d5d7"></div>
<div class="abs" style="left:224.400px;top:498.300px;width:29.600px;height:11px;background:#f7f7f8"></div>
<div class="abs" style="left:522px;top:498.300px;width:54.500px;height:11px;background:#f2f2f4"></div>
<div class="t" style="left:227.80px;top:501.00px;font-size:6.4px;color:#3a3a3a;transform:scaleX(0.894);transform-origin:0 0;-webkit-text-stroke:0.1px currentColor;">Standard</div>
<div class="t" style="left:257.80px;top:501.00px;font-size:6.4px;color:#3a3a3a;transform:scaleX(0.850);transform-origin:0 0;-webkit-text-stroke:0.1px currentColor;">Setup</div>
<div class="t" style="left:279.00px;top:501.00px;font-size:6.4px;color:#3a3a3a;transform:scaleX(0.933);transform-origin:0 0;-webkit-text-stroke:0.1px currentColor;">Programming</div>
<div class="t" style="left:321.90px;top:501.00px;font-size:6.4px;color:#3a3a3a;transform:scaleX(0.923);transform-origin:0 0;-webkit-text-stroke:0.1px currentColor;">Prismatic Machining</div>
<div class="t" style="left:381.80px;top:501.00px;font-size:6.4px;color:#3a3a3a;transform:scaleX(0.929);transform-origin:0 0;-webkit-text-stroke:0.1px currentColor;">Surface Machining</div>
<div class="t" style="left:438.00px;top:501.00px;font-size:6.4px;color:#3a3a3a;transform:scaleX(0.954);transform-origin:0 0;-webkit-text-stroke:0.1px currentColor;">Axial Machining</div>
<div class="t" style="left:487.90px;top:501.00px;font-size:6.4px;color:#3a3a3a;transform:scaleX(0.947);transform-origin:0 0;-webkit-text-stroke:0.1px currentColor;">Automation</div>
<div class="t" style="left:525.80px;top:501.00px;font-size:6.4px;color:#3a3a3a;transform:scaleX(0.941);transform-origin:0 0;-webkit-text-stroke:0.1px currentColor;">Analysis &amp; Output</div>
<div class="t" style="left:580.70px;top:501.00px;font-size:6.4px;color:#3a3a3a;transform:scaleX(0.944);transform-origin:0 0;-webkit-text-stroke:0.1px currentColor;">Options</div>
<div class="t" style="left:608.00px;top:501.00px;font-size:6.4px;color:#3a3a3a;transform:scaleX(0.909);transform-origin:0 0;-webkit-text-stroke:0.1px currentColor;">Selection</div>
<div class="t" style="left:638.90px;top:501.00px;font-size:6.4px;color:#3a3a3a;transform:scaleX(0.858);transform-origin:0 0;-webkit-text-stroke:0.1px currentColor;">View</div>
<div class="t" style="left:657.00px;top:501.00px;font-size:6.4px;color:#3a3a3a;transform:scaleX(0.885);transform-origin:0 0;-webkit-text-stroke:0.1px currentColor;">AR-VR</div>
<div class="t" style="left:682.00px;top:501.00px;font-size:6.4px;color:#3a3a3a;transform:scaleX(0.871);transform-origin:0 0;-webkit-text-stroke:0.1px currentColor;">Tools</div>
<div class="t" style="left:702.00px;top:501.00px;font-size:6.4px;color:#3a3a3a;transform:scaleX(0.902);transform-origin:0 0;-webkit-text-stroke:0.1px currentColor;">Debug</div>
<div class="t" style="left:725.50px;top:501.00px;font-size:6.4px;color:#3a3a3a;transform:scaleX(0.938);transform-origin:0 0;-webkit-text-stroke:0.1px currentColor;">Touch</div>
<svg class="abs" style="left:215px;top:498px" width="530" height="42" viewBox="215 498 530 42" fill="none"><path d="M254 499.500v8.500M275.2 499.500v8.500M317.8 499.500v8.500M378 499.500v8.500M434.3 499.500v8.500M484 499.500v8.500M522 499.500v8.500M576.5 499.500v8.500M605 499.500v8.500M635 499.500v8.500M653.8 499.500v8.500M678 499.500v8.500M698.5 499.500v8.500M722.4 499.500v8.500" stroke="#bdbdbf" stroke-width="0.600"/><path d="M224.400 498.300l2.200 0-2.200 2.200z" fill="#3d8fc0"/><path d="M217.600 512.600l1.800 1.800 1.800-1.800" stroke="#666" stroke-width="0.700"/><path d="M318.5 512v18M340 512v18M369 512v18M398.3 512v18M563 512v18" stroke="#d0d0d2" stroke-width="0.600"/><path d="M285.0 519.300h3l-1.500 1.800z" fill="#555"/><path d="M311.5 519.300h3l-1.500 1.800z" fill="#555"/><path d="M362.5 519.300h3l-1.500 1.800z" fill="#555"/><path d="M392.0 519.300h3l-1.500 1.800z" fill="#555"/><path d="M440.0 519.300h3l-1.500 1.800z" fill="#555"/><path d="M468.0 519.300h3l-1.500 1.800z" fill="#555"/><path d="M493.5 519.300h3l-1.500 1.800z" fill="#555"/><path d="M558.0 519.300h3l-1.500 1.800z" fill="#555"/><path d="M622.5 519.300h3l-1.500 1.800z" fill="#555"/><path d="M649.0 519.300h3l-1.500 1.800z" fill="#555"/><path d="M231 514l9 8M240.500 514l-9 8" stroke="#c4c6c8" stroke-width="1.600"/><circle cx="231" cy="523.500" r="2" stroke="#a9cbdc" stroke-width="1.200"/><circle cx="231.300" cy="516" r="2" stroke="#a9cbdc" stroke-width="1.200"/><path d="M248.500 513h5l2 2v7h-7z" fill="#f0f0f2" stroke="#c8c8ca" stroke-width="0.600"/><path d="M253.500 517.500h5.500l2.500 2.500v7.500h-8z" fill="#b9d0df" stroke="#a5bfd0" stroke-width="0.600"/><path d="M267.500 514.500l3-1.800h5l3 1.800v10h-11z" fill="#ececee" stroke="#c8c8ca" stroke-width="0.600"/><path d="M272.500 518h6l2.500 2.500v7h-8.500z" fill="#b9d0df" stroke="#a5bfd0" stroke-width="0.600"/><path d="M299 516.500c5-1.500 8.500 1.500 7.500 5.500-.6 2.600-3 4.500-5 4.500" stroke="#3f86ad" stroke-width="2.600" stroke-linecap="round"/><path d="M293.500 514l1 7 6-3.500z" fill="#3f86ad"/><circle cx="329.800" cy="519.600" r="4.600" stroke="#1a1a1a" stroke-width="1.300" fill="#fff"/><path d="M333 523.300l3.600 3.800" stroke="#1a1a1a" stroke-width="1.900"/><circle cx="329.800" cy="519.600" r="1.900" fill="#7aa" stroke="#355" stroke-width="0.500"/><path d="M336 517v5" stroke="#ccc" stroke-width="2"/><path d="M344.500 513.500c2.500 0 5 .5 7 2 2-1.500 4.500-2 7-2v12c-2.500 0-5 .5-7 2-2-1.500-4.500-2-7-2z" fill="#e4eef4" stroke="#2b4a60" stroke-width="0.900"/><path d="M351.500 515.500v12" stroke="#2b4a60" stroke-width="0.800"/><path d="M346 516.500c1.500 0 3 .4 4.200 1M346 519c1.500 0 3 .4 4.200 1M346 521.500c1.500 0 3 .4 4.200 1M357 516.500c-1.500 0-3 .4-4.200 1M357 519c-1.500 0-3 .4-4.200 1M357 521.500c-1.500 0-3 .4-4.200 1" stroke="#8aa" stroke-width="0.500"/><rect x="371.200" y="512.300" width="18.500" height="16.800" fill="#fbfbfc" stroke="#c2c2c4" stroke-width="0.600"/><path d="M377 522l6-3.500 5 2v3.500l-6 3.500-5-2z" fill="#9a9a9c" stroke="#333" stroke-width="0.600"/><path d="M379 520.500v-5.500c0-1.500 2-2 3.500-1.500v3" stroke="#444" stroke-width="0.900"/><path d="M380 523l5-3M381.500 524l5-3" stroke="#333" stroke-width="0.500"/><circle cx="376" cy="525.500" r="1.600" fill="#ddd" stroke="#333" stroke-width="0.600"/><circle cx="411" cy="520.800" r="5.300" stroke="#2b5a7a" stroke-width="1.300" fill="#eaf2f7"/><path d="M409.300 518l4.600 2.800-4.600 2.800z" fill="#1d3f58"/><circle cx="405.500" cy="515" r="1.700" fill="#3f86ad"/><path d="M424.500 514v12M424.500 526h4" stroke="#b5c5cf" stroke-width="1"/><rect x="428.500" y="513.500" width="7" height="6.500" fill="#d6e2ea" stroke="#a9bdca" stroke-width="0.600"/><circle cx="432" cy="524.500" r="2" stroke="#b5c5cf" stroke-width="0.800"/><rect x="449" y="513.500" width="6" height="5" fill="#3f86ad" stroke="#2b5a7a" stroke-width="0.500"/><rect x="458" y="513.500" width="6" height="5" fill="#cfdfe8" stroke="#2b5a7a" stroke-width="0.500"/><rect x="453" y="521" width="7.500" height="6.500" fill="#e8eff4" stroke="#2b5a7a" stroke-width="0.600"/><path d="M452 518.500v2.500M461 518.500v2.500" stroke="#2b5a7a" stroke-width="0.600"/><path d="M476 514v6c0 3 3 4 6 4h2" stroke="#c5d2da" stroke-width="1.600"/><path d="M483 521l3.500 3-3.500 3z" fill="#c5d2da"/><path d="M478 526.500h5" stroke="#d0d8de" stroke-width="1.500"/><circle cx="509.500" cy="520.500" r="5" fill="#d9dde0" stroke="#b9bec3" stroke-width="0.800"/><path d="M508 518l4.500 2.500-4.500 2.500z" fill="#aab0b6"/><rect x="502" y="523.500" width="4" height="4" fill="#e4e6e8" stroke="#b9bec3" stroke-width="0.500"/><circle cx="526" cy="518.500" r="4.300" fill="#7d8790" stroke="#3a4149" stroke-width="0.700"/><circle cx="531.500" cy="516" r="2.300" fill="#555c64"/><rect x="521" y="521" width="13" height="6" rx="1" fill="#c8ced3" stroke="#3a4149" stroke-width="0.600"/><path d="M523 521.500l4 2.500-4 2.500z" fill="#111"/><path d="M540 516l4-2.500 5 2v5l-4.500 2.500-4.500-2z" fill="#d9382c" stroke="#7a1a12" stroke-width="0.400"/><path d="M540 518.500l4.500 2 4.500-2.500v2.500l-4.500 2.500-4.500-2z" fill="#3aa635"/><path d="M540 516l4.500 2v2.500l-4.500-2z" fill="#e8b91c"/><circle cx="548.500" cy="521.500" r="2.800" fill="#eef" stroke="#223" stroke-width="0.900"/><path d="M550.500 523.800l3 3.400" stroke="#223" stroke-width="1.400"/><circle cx="571" cy="516" r="2.800" fill="#e6e6e8" stroke="#333" stroke-width="0.800"/><path d="M571 519v8" stroke="#333" stroke-width="1"/><path d="M577.500 513v5M575.500 516l2 2.300 2-2.300M577.500 521v5M575.500 524l2 2.300 2-2.300" stroke="#2b6f95" stroke-width="1.200"/><rect x="584.200" y="512.300" width="16.800" height="16.800" fill="#eef4f8" stroke="#5a8fb0" stroke-width="0.700"/><circle cx="594.500" cy="517.500" r="3" fill="#e6e6e8" stroke="#333" stroke-width="0.800"/><path d="M594.500 520.500v7" stroke="#333" stroke-width="1"/><path d="M586 520h5M589 518l2.300 2-2.300 2" stroke="#2b6f95" stroke-width="1.100"/><rect x="589.500" y="523" width="3" height="4.500" fill="#3f86ad"/><rect x="605" y="513.500" width="11" height="14" fill="#f4f4f6" stroke="#333" stroke-width="0.700"/><path d="M606.500 516.500h2M606.500 520h2M606.500 523.500h2" stroke="#2b6f95" stroke-width="1.300"/><path d="M610 516.500h4M610 520h3M610 523.500h3" stroke="#555" stroke-width="0.700"/><path d="M619.500 514.500l-5 6.500-.5 2 1.800-1 5-6.500z" fill="#222"/><circle cx="634" cy="516" r="2.200" stroke="#2b6f95" stroke-width="1"/><circle cx="643" cy="515" r="2.200" stroke="#2b6f95" stroke-width="1"/><circle cx="634.500" cy="525" r="2.200" stroke="#2b6f95" stroke-width="1"/><path d="M636 517l6 6M636 523.500l5.500-7" stroke="#2b6f95" stroke-width="0.800"/><path d="M642.500 520v6M640.500 524l2 2.300 2-2.300" stroke="#999" stroke-width="1"/><ellipse cx="661" cy="518.500" rx="2.600" ry="1.300" fill="#bbb" stroke="#555" stroke-width="0.500"/><path d="M658.400 518.500v7c0 1.700 5.200 1.700 5.200 0v-7" fill="#c8c8ca" stroke="#555" stroke-width="0.500"/><rect x="664" y="513.500" width="7" height="4" fill="#5aa0c8" stroke="#2b5a7a" stroke-width="0.500"/><rect x="666.500" y="519" width="5" height="3.500" fill="#5aa0c8" stroke="#2b5a7a" stroke-width="0.500"/><path d="M664 524l3 2" stroke="#222" stroke-width="0.700"/><ellipse cx="684.500" cy="515" rx="5.500" ry="2" fill="#f4f4f6" stroke="#333" stroke-width="0.700"/><path d="M679 515v10.500c0 2.600 11 2.600 11 0v-10.500" fill="#f4f4f6" stroke="#333" stroke-width="0.700"/><path d="M685 520.500c3-2 6.500-.5 6 2.500" stroke="#3f9fc0" stroke-width="1.600"/><path d="M684 523.500l5 .5-1 3.500z" fill="#3f9fc0"/></svg>
</div></body></html>
